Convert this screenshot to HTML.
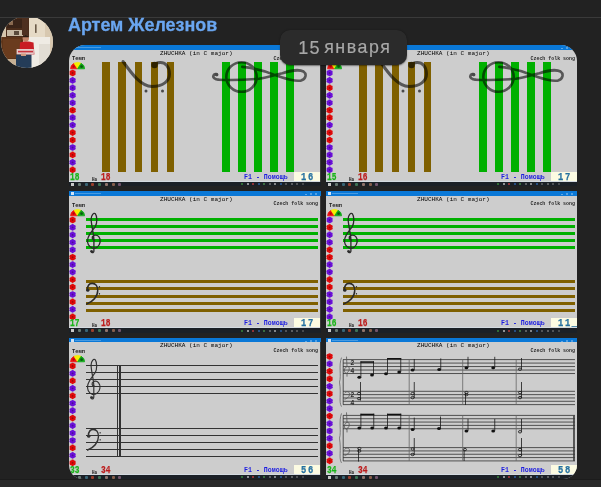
<!DOCTYPE html><html><head><meta charset="utf-8"><style>html,body{margin:0;padding:0;}body{width:601px;height:487px;overflow:hidden;position:relative;background:#222222;font-family:"Liberation Sans",sans-serif;}</style></head><body>
<div style="position:absolute;left:0.5px;top:15.5px;width:52px;height:52px;border-radius:50%;overflow:hidden;background:#e4d8c4"><svg width="52" height="52" viewBox="0 0 52 52" style="position:absolute;left:0;top:0;filter:blur(0.7px)"><g><rect x="26" y="0" width="26" height="52" fill="#e6dac6"/><rect x="44" y="0" width="8" height="52" fill="#d8c8b0"/><rect x="0" y="0" width="28" height="21" fill="#4a2c1a"/><rect x="0" y="6" width="5" height="15" fill="#d6c6ac"/><rect x="6" y="3" width="16" height="9" fill="#3a2418"/><rect x="8" y="5" width="4" height="4" fill="#8a6a50"/><rect x="6" y="14" width="16" height="6" fill="#c8baa4"/><rect x="13" y="15" width="5" height="4" fill="#5a4a3a"/><rect x="0" y="21" width="22" height="23" fill="#5e3418"/><rect x="2" y="23" width="18" height="19" fill="#6a3c1e"/><rect x="21" y="0" width="6" height="19" fill="#4e3020"/><rect x="34" y="8.3" width="1.6" height="8.6" fill="#6a5a48"/><rect x="0" y="43" width="28" height="9" fill="#c6b094"/><path d="M27 21 L49 21 L49 52 L24 52 L24 33 Z" fill="#efebe4"/><rect x="38" y="28" width="11" height="20" fill="#e2ddd4"/><circle cx="24.8" cy="22.3" r="3.2" fill="#c08468"/><path d="M21.6 21.3 C21.6 18.2 28 18.2 28 21.3 Z" fill="#2a1a10"/><path d="M19 26.5 C21 25 29 25 32.5 26.5 L33.4 38.5 L18.5 38.5 Z" fill="#c81c24"/><rect x="15.6" y="33" width="17.2" height="5.5" fill="#e4cccc"/><rect x="17" y="34.8" width="15" height="1.6" fill="#c8343c"/><path d="M15 38.7 L30.5 38.7 L30.5 52 L15 52 Z" fill="#243c58"/><rect x="20" y="37.5" width="5" height="2.5" fill="#d09a80"/></g></svg></div>
<div style="position:absolute;left:0;top:0;width:601px;height:17px;background:#222222"></div>
<div style="position:absolute;left:0;top:17px;width:601px;height:1px;background:#3a3a3a"></div>
<div style="position:absolute;left:67.5px;top:13.5px;font-size:19px;line-height:1.15;color:#6aa6f0;font-weight:bold;white-space:nowrap;-webkit-text-stroke:0.3px #6aa6f0;transform:scaleX(0.942);transform-origin:0 0;">Артем Железнов</div>
<div style="position:absolute;left:69px;top:45px;width:252px;height:141px;overflow:hidden;border-radius:16px 0px 0px 0px;background:#cdcdcd">
<div style="position:absolute;left:0px;top:0px;width:252px;height:5px;background:#0a78d7;"></div>
<div style="position:absolute;left:2px;top:1.2px;width:2.5px;height:2.5px;background:#cfe3f7;"></div>
<div style="position:absolute;left:5.5px;top:2px;width:26px;height:1px;background:rgba(255,255,255,0.25);"></div>
<div style="position:absolute;left:236px;top:2.5px;width:2px;height:1px;background:rgba(255,255,255,0.35);"></div>
<div style="position:absolute;left:241px;top:1.5px;width:2px;height:2px;background:rgba(255,255,255,0.3);"></div>
<div style="position:absolute;left:246px;top:1.5px;width:2px;height:2px;background:rgba(255,255,255,0.3);"></div>
<div style="position:absolute;left:0px;top:136px;width:252px;height:1px;background:#d4dae0;"></div>
<div style="position:absolute;left:0px;top:137px;width:252px;height:4px;background:#1b2026;"></div>
<div style="position:absolute;left:1.5px;top:137.5px;width:3px;height:3px;background:#c8c8c8;"></div>
<div style="position:absolute;left:9.0px;top:137.5px;width:3px;height:3px;background:#8fa89a;border-radius:1px;opacity:0.65;"></div>
<div style="position:absolute;left:15.7px;top:137.5px;width:3px;height:3px;background:#4a8aa0;border-radius:1px;opacity:0.65;"></div>
<div style="position:absolute;left:22.4px;top:137.5px;width:3px;height:3px;background:#e05030;border-radius:1px;opacity:0.65;"></div>
<div style="position:absolute;left:29.1px;top:137.5px;width:3px;height:3px;background:#50a070;border-radius:1px;opacity:0.65;"></div>
<div style="position:absolute;left:35.8px;top:137.5px;width:3px;height:3px;background:#d0a090;border-radius:1px;opacity:0.65;"></div>
<div style="position:absolute;left:42.5px;top:137.5px;width:3px;height:3px;background:#c08060;border-radius:1px;opacity:0.65;"></div>
<div style="position:absolute;left:49.2px;top:137.5px;width:3px;height:3px;background:#a07090;border-radius:1px;opacity:0.65;"></div>
<div style="position:absolute;left:172.0px;top:138.0px;width:2px;height:2px;background:#40a040;opacity:0.6;"></div>
<div style="position:absolute;left:177.5px;top:138.0px;width:2px;height:2px;background:#e0e0e0;opacity:0.6;"></div>
<div style="position:absolute;left:183.0px;top:138.0px;width:2px;height:2px;background:#e04040;opacity:0.6;"></div>
<div style="position:absolute;left:188.5px;top:138.0px;width:2px;height:2px;background:#3070c0;opacity:0.6;"></div>
<div style="position:absolute;left:194.0px;top:138.0px;width:2px;height:2px;background:#50a050;opacity:0.6;"></div>
<div style="position:absolute;left:199.5px;top:138.0px;width:2px;height:2px;background:#888;opacity:0.6;"></div>
<div style="position:absolute;left:205.0px;top:138.0px;width:2px;height:2px;background:#ccc;opacity:0.6;"></div>
<div style="position:absolute;left:210.5px;top:138.0px;width:2px;height:2px;background:#3070c0;opacity:0.6;"></div>
<div style="position:absolute;left:216.0px;top:138.0px;width:2px;height:2px;background:#777;opacity:0.6;"></div>
<div style="position:absolute;left:221.5px;top:138.0px;width:2px;height:2px;background:#888;opacity:0.6;"></div>
<div style="position:absolute;left:227.0px;top:138.0px;width:2px;height:2px;background:#777;opacity:0.6;"></div>
<div style="position:absolute;left:232.5px;top:138.0px;width:2px;height:2px;background:#666;opacity:0.6;"></div>
<div style="position:absolute;left:250.8px;top:5px;width:1.2px;height:132px;background:#3c3c3c;"></div>
<div style="position:absolute;left:91px;top:5.5px;font-size:6.05px;line-height:1;color:#000;white-space:nowrap;font-family:'Liberation Mono',monospace;">ZHUCHKA (in C major)</div>
<div style="position:absolute;left:204.5px;top:11.5px;font-size:4.95px;line-height:1;color:#2a2a2a;white-space:nowrap;font-family:'Liberation Mono',monospace;font-weight:bold;">Czech folk song</div>
<div style="position:absolute;left:2.6px;top:11.3px;font-size:6px;line-height:1;color:#1a1a1a;white-space:nowrap;font-family:'Liberation Mono',monospace;font-weight:bold;transform:scaleX(0.9);transform-origin:0 0;">Темп</div>
<svg style="position:absolute;left:0px;top:16px" width="18" height="9" viewBox="0 0 18 9"><path d="M8.6 7.8 L1.6 7.8 A7 6.3 0 0 1 5.1 2.3 Z" fill="#f01010" stroke="#f01010" stroke-width="0.8" stroke-linejoin="round"/><path d="M8.6 7.8 L5.1 2.3 A7 6.3 0 0 1 12.1 2.3 Z" fill="#f4f000" stroke="#f4f000" stroke-width="0.8" stroke-linejoin="round"/><path d="M8.6 7.8 L12.1 2.3 A7 6.3 0 0 1 15.6 7.8 Z" fill="#10a818" stroke="#10a818" stroke-width="0.8" stroke-linejoin="round"/><circle cx="12.6" cy="5.6" r="1.3" fill="#0a5a10"/><circle cx="4.6" cy="5.6" r="1.1" fill="#b00808"/></svg>
<svg style="position:absolute;left:0px;top:0px" width="8" height="141" viewBox="0 0 8 141"><circle cx="5.25" cy="28.95" r="1.45" fill="#e00a0a"/><circle cx="3.60" cy="29.90" r="1.45" fill="#e00a0a"/><circle cx="1.95" cy="28.95" r="1.45" fill="#e00a0a"/><circle cx="1.95" cy="27.05" r="1.45" fill="#e00a0a"/><circle cx="3.60" cy="26.10" r="1.45" fill="#e00a0a"/><circle cx="5.25" cy="27.05" r="1.45" fill="#e00a0a"/><circle cx="3.6" cy="28" r="2.2" fill="#e00a0a"/><circle cx="3.6" cy="28" r="0.9" fill="#000" opacity="0.3"/><circle cx="5.25" cy="36.40" r="1.45" fill="#6a10d8"/><circle cx="3.60" cy="37.35" r="1.45" fill="#6a10d8"/><circle cx="1.95" cy="36.40" r="1.45" fill="#6a10d8"/><circle cx="1.95" cy="34.50" r="1.45" fill="#6a10d8"/><circle cx="3.60" cy="33.55" r="1.45" fill="#6a10d8"/><circle cx="5.25" cy="34.50" r="1.45" fill="#6a10d8"/><circle cx="3.6" cy="35.45" r="2.2" fill="#6a10d8"/><circle cx="3.6" cy="35.45" r="0.9" fill="#000" opacity="0.3"/><circle cx="5.25" cy="43.85" r="1.45" fill="#6a10d8"/><circle cx="3.60" cy="44.80" r="1.45" fill="#6a10d8"/><circle cx="1.95" cy="43.85" r="1.45" fill="#6a10d8"/><circle cx="1.95" cy="41.95" r="1.45" fill="#6a10d8"/><circle cx="3.60" cy="41.00" r="1.45" fill="#6a10d8"/><circle cx="5.25" cy="41.95" r="1.45" fill="#6a10d8"/><circle cx="3.6" cy="42.900000000000006" r="2.2" fill="#6a10d8"/><circle cx="3.6" cy="42.900000000000006" r="0.9" fill="#000" opacity="0.3"/><circle cx="5.25" cy="51.30" r="1.45" fill="#6a10d8"/><circle cx="3.60" cy="52.25" r="1.45" fill="#6a10d8"/><circle cx="1.95" cy="51.30" r="1.45" fill="#6a10d8"/><circle cx="1.95" cy="49.40" r="1.45" fill="#6a10d8"/><circle cx="3.60" cy="48.45" r="1.45" fill="#6a10d8"/><circle cx="5.25" cy="49.40" r="1.45" fill="#6a10d8"/><circle cx="3.6" cy="50.35000000000001" r="2.2" fill="#6a10d8"/><circle cx="3.6" cy="50.35000000000001" r="0.9" fill="#000" opacity="0.3"/><circle cx="5.25" cy="58.75" r="1.45" fill="#6a10d8"/><circle cx="3.60" cy="59.70" r="1.45" fill="#6a10d8"/><circle cx="1.95" cy="58.75" r="1.45" fill="#6a10d8"/><circle cx="1.95" cy="56.85" r="1.45" fill="#6a10d8"/><circle cx="3.60" cy="55.90" r="1.45" fill="#6a10d8"/><circle cx="5.25" cy="56.85" r="1.45" fill="#6a10d8"/><circle cx="3.6" cy="57.80000000000001" r="2.2" fill="#6a10d8"/><circle cx="3.6" cy="57.80000000000001" r="0.9" fill="#000" opacity="0.3"/><circle cx="5.25" cy="66.20" r="1.45" fill="#e00a0a"/><circle cx="3.60" cy="67.15" r="1.45" fill="#e00a0a"/><circle cx="1.95" cy="66.20" r="1.45" fill="#e00a0a"/><circle cx="1.95" cy="64.30" r="1.45" fill="#e00a0a"/><circle cx="3.60" cy="63.35" r="1.45" fill="#e00a0a"/><circle cx="5.25" cy="64.30" r="1.45" fill="#e00a0a"/><circle cx="3.6" cy="65.25000000000001" r="2.2" fill="#e00a0a"/><circle cx="3.6" cy="65.25000000000001" r="0.9" fill="#000" opacity="0.3"/><circle cx="5.25" cy="73.65" r="1.45" fill="#6a10d8"/><circle cx="3.60" cy="74.60" r="1.45" fill="#6a10d8"/><circle cx="1.95" cy="73.65" r="1.45" fill="#6a10d8"/><circle cx="1.95" cy="71.75" r="1.45" fill="#6a10d8"/><circle cx="3.60" cy="70.80" r="1.45" fill="#6a10d8"/><circle cx="5.25" cy="71.75" r="1.45" fill="#6a10d8"/><circle cx="3.6" cy="72.70000000000002" r="2.2" fill="#6a10d8"/><circle cx="3.6" cy="72.70000000000002" r="0.9" fill="#000" opacity="0.3"/><circle cx="5.25" cy="81.10" r="1.45" fill="#6a10d8"/><circle cx="3.60" cy="82.05" r="1.45" fill="#6a10d8"/><circle cx="1.95" cy="81.10" r="1.45" fill="#6a10d8"/><circle cx="1.95" cy="79.20" r="1.45" fill="#6a10d8"/><circle cx="3.60" cy="78.25" r="1.45" fill="#6a10d8"/><circle cx="5.25" cy="79.20" r="1.45" fill="#6a10d8"/><circle cx="3.6" cy="80.15000000000002" r="2.2" fill="#6a10d8"/><circle cx="3.6" cy="80.15000000000002" r="0.9" fill="#000" opacity="0.3"/><circle cx="5.25" cy="88.55" r="1.45" fill="#e00a0a"/><circle cx="3.60" cy="89.50" r="1.45" fill="#e00a0a"/><circle cx="1.95" cy="88.55" r="1.45" fill="#e00a0a"/><circle cx="1.95" cy="86.65" r="1.45" fill="#e00a0a"/><circle cx="3.60" cy="85.70" r="1.45" fill="#e00a0a"/><circle cx="5.25" cy="86.65" r="1.45" fill="#e00a0a"/><circle cx="3.6" cy="87.60000000000002" r="2.2" fill="#e00a0a"/><circle cx="3.6" cy="87.60000000000002" r="0.9" fill="#000" opacity="0.3"/><circle cx="5.25" cy="96.00" r="1.45" fill="#e00a0a"/><circle cx="3.60" cy="96.95" r="1.45" fill="#e00a0a"/><circle cx="1.95" cy="96.00" r="1.45" fill="#e00a0a"/><circle cx="1.95" cy="94.10" r="1.45" fill="#e00a0a"/><circle cx="3.60" cy="93.15" r="1.45" fill="#e00a0a"/><circle cx="5.25" cy="94.10" r="1.45" fill="#e00a0a"/><circle cx="3.6" cy="95.05000000000003" r="2.2" fill="#e00a0a"/><circle cx="3.6" cy="95.05000000000003" r="0.9" fill="#000" opacity="0.3"/><circle cx="5.25" cy="103.45" r="1.45" fill="#6a10d8"/><circle cx="3.60" cy="104.40" r="1.45" fill="#6a10d8"/><circle cx="1.95" cy="103.45" r="1.45" fill="#6a10d8"/><circle cx="1.95" cy="101.55" r="1.45" fill="#6a10d8"/><circle cx="3.60" cy="100.60" r="1.45" fill="#6a10d8"/><circle cx="5.25" cy="101.55" r="1.45" fill="#6a10d8"/><circle cx="3.6" cy="102.50000000000003" r="2.2" fill="#6a10d8"/><circle cx="3.6" cy="102.50000000000003" r="0.9" fill="#000" opacity="0.3"/><circle cx="5.25" cy="110.90" r="1.45" fill="#e00a0a"/><circle cx="3.60" cy="111.85" r="1.45" fill="#e00a0a"/><circle cx="1.95" cy="110.90" r="1.45" fill="#e00a0a"/><circle cx="1.95" cy="109.00" r="1.45" fill="#e00a0a"/><circle cx="3.60" cy="108.05" r="1.45" fill="#e00a0a"/><circle cx="5.25" cy="109.00" r="1.45" fill="#e00a0a"/><circle cx="3.6" cy="109.95000000000003" r="2.2" fill="#e00a0a"/><circle cx="3.6" cy="109.95000000000003" r="0.9" fill="#000" opacity="0.3"/><circle cx="5.25" cy="118.35" r="1.45" fill="#6a10d8"/><circle cx="3.60" cy="119.30" r="1.45" fill="#6a10d8"/><circle cx="1.95" cy="118.35" r="1.45" fill="#6a10d8"/><circle cx="1.95" cy="116.45" r="1.45" fill="#6a10d8"/><circle cx="3.60" cy="115.50" r="1.45" fill="#6a10d8"/><circle cx="5.25" cy="116.45" r="1.45" fill="#6a10d8"/><circle cx="3.6" cy="117.40000000000003" r="2.2" fill="#6a10d8"/><circle cx="3.6" cy="117.40000000000003" r="0.9" fill="#000" opacity="0.3"/><circle cx="5.25" cy="125.80" r="1.45" fill="#e00a0a"/><circle cx="3.60" cy="126.75" r="1.45" fill="#e00a0a"/><circle cx="1.95" cy="125.80" r="1.45" fill="#e00a0a"/><circle cx="1.95" cy="123.90" r="1.45" fill="#e00a0a"/><circle cx="3.60" cy="122.95" r="1.45" fill="#e00a0a"/><circle cx="5.25" cy="123.90" r="1.45" fill="#e00a0a"/><circle cx="3.6" cy="124.85000000000004" r="2.2" fill="#e00a0a"/><circle cx="3.6" cy="124.85000000000004" r="0.9" fill="#000" opacity="0.3"/></svg>
<div style="position:absolute;left:33.3px;top:16.7px;width:7.8px;height:110.3px;background:#7f6000;"></div>
<div style="position:absolute;left:153.2px;top:16.7px;width:7.8px;height:110.3px;background:#00b000;"></div>
<div style="position:absolute;left:49.4px;top:16.7px;width:7.8px;height:110.3px;background:#7f6000;"></div>
<div style="position:absolute;left:169.2px;top:16.7px;width:7.8px;height:110.3px;background:#00b000;"></div>
<div style="position:absolute;left:65.5px;top:16.7px;width:7.8px;height:110.3px;background:#7f6000;"></div>
<div style="position:absolute;left:185.2px;top:16.7px;width:7.8px;height:110.3px;background:#00b000;"></div>
<div style="position:absolute;left:81.6px;top:16.7px;width:7.8px;height:110.3px;background:#7f6000;"></div>
<div style="position:absolute;left:201.2px;top:16.7px;width:7.8px;height:110.3px;background:#00b000;"></div>
<div style="position:absolute;left:97.7px;top:16.7px;width:7.8px;height:110.3px;background:#7f6000;"></div>
<div style="position:absolute;left:217.2px;top:16.7px;width:7.8px;height:110.3px;background:#00b000;"></div>
<svg style="position:absolute;left:0;top:-1px;mix-blend-mode:multiply" width="252" height="141" viewBox="0 0 252 141"><g fill="none" stroke="#6c6c6c" stroke-width="2.6" stroke-linecap="round"><path stroke-width="3" d="M54 17.5 C63 30 72 42.5 83 42.5 C94 42.5 100.5 37 100.5 30 C100.5 22 96 18.3 91 18.5 C88 18.6 86 19.5 85 21"/><path d="M149.5 35.7 C158 36.2 175 36 189.8 34.8 C200 33.5 208 30 213.5 29.3 C220 27 230 25 234.5 27.5 C238 30 237 35 232 36.6 C225 37.5 218 35 206.2 31.1 C196 27 186 24 173.3 22.9"/><ellipse cx="172.5" cy="33" rx="15.2" ry="14.8"/><path d="M149.5 35.7 C146 35.5 143.5 33.5 144.5 31.5 C145.5 29.8 147.5 29.8 148 31"/></g><g fill="#5a5a5a"><circle cx="85.5" cy="21" r="3.3"/><circle cx="77" cy="47" r="1.5"/><circle cx="93.5" cy="47" r="1.5"/><circle cx="147.5" cy="30.5" r="1.8"/></g></svg>
<div style="position:absolute;left:0.6px;top:126.4px;font-size:11.6px;line-height:1;color:#18b418;white-space:nowrap;font-family:'Liberation Mono',monospace;font-weight:bold;-webkit-text-stroke:0.25px currentColor;transform:scaleX(0.68);transform-origin:0 0;">18</div>
<div style="position:absolute;left:23px;top:132.6px;font-size:5px;line-height:1;color:#1a1a1a;white-space:nowrap;font-family:'Liberation Mono',monospace;font-weight:bold;transform:scaleX(0.85);transform-origin:0 0;">На</div>
<div style="position:absolute;left:31.6px;top:126.4px;font-size:11.6px;line-height:1;color:#bc1c1c;white-space:nowrap;font-family:'Liberation Mono',monospace;font-weight:bold;-webkit-text-stroke:0.25px currentColor;transform:scaleX(0.68);transform-origin:0 0;">18</div>
<div style="position:absolute;left:174.5px;top:129.3px;font-size:7.2px;line-height:1;color:#1c1ce0;white-space:nowrap;font-family:'Liberation Mono',monospace;font-weight:bold;transform:scaleX(0.92);transform-origin:0 0;">F1 - Помощь</div>
<div style="position:absolute;left:225.2px;top:127.4px;width:25.600000000000012px;height:8.3px;background:#fcfbe2;"></div>
<div style="position:absolute;left:231.6px;top:126.7px;font-size:11px;line-height:1;color:#2470a0;white-space:nowrap;font-family:'Liberation Mono',monospace;font-weight:bold;letter-spacing:2px;-webkit-text-stroke:0.25px currentColor;transform:scaleX(0.8);transform-origin:0 0;">16</div>
</div>
<div style="position:absolute;left:326px;top:45px;width:251px;height:141px;overflow:hidden;border-radius:0px 16px 0px 0px;background:#cdcdcd">
<div style="position:absolute;left:0px;top:0px;width:251px;height:5px;background:#0a78d7;"></div>
<div style="position:absolute;left:2px;top:1.2px;width:2.5px;height:2.5px;background:#cfe3f7;"></div>
<div style="position:absolute;left:5.5px;top:2px;width:26px;height:1px;background:rgba(255,255,255,0.25);"></div>
<div style="position:absolute;left:235px;top:2.5px;width:2px;height:1px;background:rgba(255,255,255,0.35);"></div>
<div style="position:absolute;left:240px;top:1.5px;width:2px;height:2px;background:rgba(255,255,255,0.3);"></div>
<div style="position:absolute;left:245px;top:1.5px;width:2px;height:2px;background:rgba(255,255,255,0.3);"></div>
<div style="position:absolute;left:0px;top:136px;width:251px;height:1px;background:#d4dae0;"></div>
<div style="position:absolute;left:0px;top:137px;width:251px;height:4px;background:#1b2026;"></div>
<div style="position:absolute;left:1.5px;top:137.5px;width:3px;height:3px;background:#c8c8c8;"></div>
<div style="position:absolute;left:9.0px;top:137.5px;width:3px;height:3px;background:#8fa89a;border-radius:1px;opacity:0.65;"></div>
<div style="position:absolute;left:15.7px;top:137.5px;width:3px;height:3px;background:#4a8aa0;border-radius:1px;opacity:0.65;"></div>
<div style="position:absolute;left:22.4px;top:137.5px;width:3px;height:3px;background:#e05030;border-radius:1px;opacity:0.65;"></div>
<div style="position:absolute;left:29.1px;top:137.5px;width:3px;height:3px;background:#50a070;border-radius:1px;opacity:0.65;"></div>
<div style="position:absolute;left:35.8px;top:137.5px;width:3px;height:3px;background:#d0a090;border-radius:1px;opacity:0.65;"></div>
<div style="position:absolute;left:42.5px;top:137.5px;width:3px;height:3px;background:#c08060;border-radius:1px;opacity:0.65;"></div>
<div style="position:absolute;left:49.2px;top:137.5px;width:3px;height:3px;background:#a07090;border-radius:1px;opacity:0.65;"></div>
<div style="position:absolute;left:171.0px;top:138.0px;width:2px;height:2px;background:#40a040;opacity:0.6;"></div>
<div style="position:absolute;left:176.5px;top:138.0px;width:2px;height:2px;background:#e0e0e0;opacity:0.6;"></div>
<div style="position:absolute;left:182.0px;top:138.0px;width:2px;height:2px;background:#e04040;opacity:0.6;"></div>
<div style="position:absolute;left:187.5px;top:138.0px;width:2px;height:2px;background:#3070c0;opacity:0.6;"></div>
<div style="position:absolute;left:193.0px;top:138.0px;width:2px;height:2px;background:#50a050;opacity:0.6;"></div>
<div style="position:absolute;left:198.5px;top:138.0px;width:2px;height:2px;background:#888;opacity:0.6;"></div>
<div style="position:absolute;left:204.0px;top:138.0px;width:2px;height:2px;background:#ccc;opacity:0.6;"></div>
<div style="position:absolute;left:209.5px;top:138.0px;width:2px;height:2px;background:#3070c0;opacity:0.6;"></div>
<div style="position:absolute;left:215.0px;top:138.0px;width:2px;height:2px;background:#777;opacity:0.6;"></div>
<div style="position:absolute;left:220.5px;top:138.0px;width:2px;height:2px;background:#888;opacity:0.6;"></div>
<div style="position:absolute;left:226.0px;top:138.0px;width:2px;height:2px;background:#777;opacity:0.6;"></div>
<div style="position:absolute;left:231.5px;top:138.0px;width:2px;height:2px;background:#666;opacity:0.6;"></div>
<div style="position:absolute;left:91px;top:5.5px;font-size:6.05px;line-height:1;color:#000;white-space:nowrap;font-family:'Liberation Mono',monospace;">ZHUCHKA (in C major)</div>
<div style="position:absolute;left:204.5px;top:11.5px;font-size:4.95px;line-height:1;color:#2a2a2a;white-space:nowrap;font-family:'Liberation Mono',monospace;font-weight:bold;">Czech folk song</div>
<div style="position:absolute;left:2.6px;top:11.3px;font-size:6px;line-height:1;color:#1a1a1a;white-space:nowrap;font-family:'Liberation Mono',monospace;font-weight:bold;transform:scaleX(0.9);transform-origin:0 0;">Темп</div>
<svg style="position:absolute;left:0px;top:16px" width="18" height="9" viewBox="0 0 18 9"><path d="M8.6 7.8 L1.6 7.8 A7 6.3 0 0 1 5.1 2.3 Z" fill="#f01010" stroke="#f01010" stroke-width="0.8" stroke-linejoin="round"/><path d="M8.6 7.8 L5.1 2.3 A7 6.3 0 0 1 12.1 2.3 Z" fill="#f4f000" stroke="#f4f000" stroke-width="0.8" stroke-linejoin="round"/><path d="M8.6 7.8 L12.1 2.3 A7 6.3 0 0 1 15.6 7.8 Z" fill="#10a818" stroke="#10a818" stroke-width="0.8" stroke-linejoin="round"/><circle cx="12.6" cy="5.6" r="1.3" fill="#0a5a10"/><circle cx="4.6" cy="5.6" r="1.1" fill="#b00808"/></svg>
<svg style="position:absolute;left:0px;top:0px" width="8" height="141" viewBox="0 0 8 141"><circle cx="5.25" cy="28.95" r="1.45" fill="#6a10d8"/><circle cx="3.60" cy="29.90" r="1.45" fill="#6a10d8"/><circle cx="1.95" cy="28.95" r="1.45" fill="#6a10d8"/><circle cx="1.95" cy="27.05" r="1.45" fill="#6a10d8"/><circle cx="3.60" cy="26.10" r="1.45" fill="#6a10d8"/><circle cx="5.25" cy="27.05" r="1.45" fill="#6a10d8"/><circle cx="3.6" cy="28" r="2.2" fill="#6a10d8"/><circle cx="3.6" cy="28" r="0.9" fill="#000" opacity="0.3"/><circle cx="5.25" cy="36.40" r="1.45" fill="#6a10d8"/><circle cx="3.60" cy="37.35" r="1.45" fill="#6a10d8"/><circle cx="1.95" cy="36.40" r="1.45" fill="#6a10d8"/><circle cx="1.95" cy="34.50" r="1.45" fill="#6a10d8"/><circle cx="3.60" cy="33.55" r="1.45" fill="#6a10d8"/><circle cx="5.25" cy="34.50" r="1.45" fill="#6a10d8"/><circle cx="3.6" cy="35.45" r="2.2" fill="#6a10d8"/><circle cx="3.6" cy="35.45" r="0.9" fill="#000" opacity="0.3"/><circle cx="5.25" cy="43.85" r="1.45" fill="#e00a0a"/><circle cx="3.60" cy="44.80" r="1.45" fill="#e00a0a"/><circle cx="1.95" cy="43.85" r="1.45" fill="#e00a0a"/><circle cx="1.95" cy="41.95" r="1.45" fill="#e00a0a"/><circle cx="3.60" cy="41.00" r="1.45" fill="#e00a0a"/><circle cx="5.25" cy="41.95" r="1.45" fill="#e00a0a"/><circle cx="3.6" cy="42.900000000000006" r="2.2" fill="#e00a0a"/><circle cx="3.6" cy="42.900000000000006" r="0.9" fill="#000" opacity="0.3"/><circle cx="5.25" cy="51.30" r="1.45" fill="#6a10d8"/><circle cx="3.60" cy="52.25" r="1.45" fill="#6a10d8"/><circle cx="1.95" cy="51.30" r="1.45" fill="#6a10d8"/><circle cx="1.95" cy="49.40" r="1.45" fill="#6a10d8"/><circle cx="3.60" cy="48.45" r="1.45" fill="#6a10d8"/><circle cx="5.25" cy="49.40" r="1.45" fill="#6a10d8"/><circle cx="3.6" cy="50.35000000000001" r="2.2" fill="#6a10d8"/><circle cx="3.6" cy="50.35000000000001" r="0.9" fill="#000" opacity="0.3"/><circle cx="5.25" cy="58.75" r="1.45" fill="#6a10d8"/><circle cx="3.60" cy="59.70" r="1.45" fill="#6a10d8"/><circle cx="1.95" cy="58.75" r="1.45" fill="#6a10d8"/><circle cx="1.95" cy="56.85" r="1.45" fill="#6a10d8"/><circle cx="3.60" cy="55.90" r="1.45" fill="#6a10d8"/><circle cx="5.25" cy="56.85" r="1.45" fill="#6a10d8"/><circle cx="3.6" cy="57.80000000000001" r="2.2" fill="#6a10d8"/><circle cx="3.6" cy="57.80000000000001" r="0.9" fill="#000" opacity="0.3"/><circle cx="5.25" cy="66.20" r="1.45" fill="#e00a0a"/><circle cx="3.60" cy="67.15" r="1.45" fill="#e00a0a"/><circle cx="1.95" cy="66.20" r="1.45" fill="#e00a0a"/><circle cx="1.95" cy="64.30" r="1.45" fill="#e00a0a"/><circle cx="3.60" cy="63.35" r="1.45" fill="#e00a0a"/><circle cx="5.25" cy="64.30" r="1.45" fill="#e00a0a"/><circle cx="3.6" cy="65.25000000000001" r="2.2" fill="#e00a0a"/><circle cx="3.6" cy="65.25000000000001" r="0.9" fill="#000" opacity="0.3"/><circle cx="5.25" cy="73.65" r="1.45" fill="#e00a0a"/><circle cx="3.60" cy="74.60" r="1.45" fill="#e00a0a"/><circle cx="1.95" cy="73.65" r="1.45" fill="#e00a0a"/><circle cx="1.95" cy="71.75" r="1.45" fill="#e00a0a"/><circle cx="3.60" cy="70.80" r="1.45" fill="#e00a0a"/><circle cx="5.25" cy="71.75" r="1.45" fill="#e00a0a"/><circle cx="3.6" cy="72.70000000000002" r="2.2" fill="#e00a0a"/><circle cx="3.6" cy="72.70000000000002" r="0.9" fill="#000" opacity="0.3"/><circle cx="5.25" cy="81.10" r="1.45" fill="#6a10d8"/><circle cx="3.60" cy="82.05" r="1.45" fill="#6a10d8"/><circle cx="1.95" cy="81.10" r="1.45" fill="#6a10d8"/><circle cx="1.95" cy="79.20" r="1.45" fill="#6a10d8"/><circle cx="3.60" cy="78.25" r="1.45" fill="#6a10d8"/><circle cx="5.25" cy="79.20" r="1.45" fill="#6a10d8"/><circle cx="3.6" cy="80.15000000000002" r="2.2" fill="#6a10d8"/><circle cx="3.6" cy="80.15000000000002" r="0.9" fill="#000" opacity="0.3"/><circle cx="5.25" cy="88.55" r="1.45" fill="#e00a0a"/><circle cx="3.60" cy="89.50" r="1.45" fill="#e00a0a"/><circle cx="1.95" cy="88.55" r="1.45" fill="#e00a0a"/><circle cx="1.95" cy="86.65" r="1.45" fill="#e00a0a"/><circle cx="3.60" cy="85.70" r="1.45" fill="#e00a0a"/><circle cx="5.25" cy="86.65" r="1.45" fill="#e00a0a"/><circle cx="3.6" cy="87.60000000000002" r="2.2" fill="#e00a0a"/><circle cx="3.6" cy="87.60000000000002" r="0.9" fill="#000" opacity="0.3"/><circle cx="5.25" cy="96.00" r="1.45" fill="#e00a0a"/><circle cx="3.60" cy="96.95" r="1.45" fill="#e00a0a"/><circle cx="1.95" cy="96.00" r="1.45" fill="#e00a0a"/><circle cx="1.95" cy="94.10" r="1.45" fill="#e00a0a"/><circle cx="3.60" cy="93.15" r="1.45" fill="#e00a0a"/><circle cx="5.25" cy="94.10" r="1.45" fill="#e00a0a"/><circle cx="3.6" cy="95.05000000000003" r="2.2" fill="#e00a0a"/><circle cx="3.6" cy="95.05000000000003" r="0.9" fill="#000" opacity="0.3"/><circle cx="5.25" cy="103.45" r="1.45" fill="#6a10d8"/><circle cx="3.60" cy="104.40" r="1.45" fill="#6a10d8"/><circle cx="1.95" cy="103.45" r="1.45" fill="#6a10d8"/><circle cx="1.95" cy="101.55" r="1.45" fill="#6a10d8"/><circle cx="3.60" cy="100.60" r="1.45" fill="#6a10d8"/><circle cx="5.25" cy="101.55" r="1.45" fill="#6a10d8"/><circle cx="3.6" cy="102.50000000000003" r="2.2" fill="#6a10d8"/><circle cx="3.6" cy="102.50000000000003" r="0.9" fill="#000" opacity="0.3"/><circle cx="5.25" cy="110.90" r="1.45" fill="#6a10d8"/><circle cx="3.60" cy="111.85" r="1.45" fill="#6a10d8"/><circle cx="1.95" cy="110.90" r="1.45" fill="#6a10d8"/><circle cx="1.95" cy="109.00" r="1.45" fill="#6a10d8"/><circle cx="3.60" cy="108.05" r="1.45" fill="#6a10d8"/><circle cx="5.25" cy="109.00" r="1.45" fill="#6a10d8"/><circle cx="3.6" cy="109.95000000000003" r="2.2" fill="#6a10d8"/><circle cx="3.6" cy="109.95000000000003" r="0.9" fill="#000" opacity="0.3"/><circle cx="5.25" cy="118.35" r="1.45" fill="#6a10d8"/><circle cx="3.60" cy="119.30" r="1.45" fill="#6a10d8"/><circle cx="1.95" cy="118.35" r="1.45" fill="#6a10d8"/><circle cx="1.95" cy="116.45" r="1.45" fill="#6a10d8"/><circle cx="3.60" cy="115.50" r="1.45" fill="#6a10d8"/><circle cx="5.25" cy="116.45" r="1.45" fill="#6a10d8"/><circle cx="3.6" cy="117.40000000000003" r="2.2" fill="#6a10d8"/><circle cx="3.6" cy="117.40000000000003" r="0.9" fill="#000" opacity="0.3"/><circle cx="5.25" cy="125.80" r="1.45" fill="#6a10d8"/><circle cx="3.60" cy="126.75" r="1.45" fill="#6a10d8"/><circle cx="1.95" cy="125.80" r="1.45" fill="#6a10d8"/><circle cx="1.95" cy="123.90" r="1.45" fill="#6a10d8"/><circle cx="3.60" cy="122.95" r="1.45" fill="#6a10d8"/><circle cx="5.25" cy="123.90" r="1.45" fill="#6a10d8"/><circle cx="3.6" cy="124.85000000000004" r="2.2" fill="#6a10d8"/><circle cx="3.6" cy="124.85000000000004" r="0.9" fill="#000" opacity="0.3"/></svg>
<div style="position:absolute;left:33.3px;top:16.7px;width:7.8px;height:110.3px;background:#7f6000;"></div>
<div style="position:absolute;left:153.2px;top:16.7px;width:7.8px;height:110.3px;background:#00b000;"></div>
<div style="position:absolute;left:49.4px;top:16.7px;width:7.8px;height:110.3px;background:#7f6000;"></div>
<div style="position:absolute;left:169.2px;top:16.7px;width:7.8px;height:110.3px;background:#00b000;"></div>
<div style="position:absolute;left:65.5px;top:16.7px;width:7.8px;height:110.3px;background:#7f6000;"></div>
<div style="position:absolute;left:185.2px;top:16.7px;width:7.8px;height:110.3px;background:#00b000;"></div>
<div style="position:absolute;left:81.6px;top:16.7px;width:7.8px;height:110.3px;background:#7f6000;"></div>
<div style="position:absolute;left:201.2px;top:16.7px;width:7.8px;height:110.3px;background:#00b000;"></div>
<div style="position:absolute;left:97.7px;top:16.7px;width:7.8px;height:110.3px;background:#7f6000;"></div>
<div style="position:absolute;left:217.2px;top:16.7px;width:7.8px;height:110.3px;background:#00b000;"></div>
<svg style="position:absolute;left:0;top:-1px;mix-blend-mode:multiply" width="251" height="141" viewBox="0 0 251 141"><g fill="none" stroke="#6c6c6c" stroke-width="2.6" stroke-linecap="round"><path stroke-width="3" d="M54 17.5 C63 30 72 42.5 83 42.5 C94 42.5 100.5 37 100.5 30 C100.5 22 96 18.3 91 18.5 C88 18.6 86 19.5 85 21"/><path d="M149.5 35.7 C158 36.2 175 36 189.8 34.8 C200 33.5 208 30 213.5 29.3 C220 27 230 25 234.5 27.5 C238 30 237 35 232 36.6 C225 37.5 218 35 206.2 31.1 C196 27 186 24 173.3 22.9"/><ellipse cx="172.5" cy="33" rx="15.2" ry="14.8"/><path d="M149.5 35.7 C146 35.5 143.5 33.5 144.5 31.5 C145.5 29.8 147.5 29.8 148 31"/></g><g fill="#5a5a5a"><circle cx="85.5" cy="21" r="3.3"/><circle cx="77" cy="47" r="1.5"/><circle cx="93.5" cy="47" r="1.5"/><circle cx="147.5" cy="30.5" r="1.8"/></g></svg>
<div style="position:absolute;left:0.6px;top:126.4px;font-size:11.6px;line-height:1;color:#18b418;white-space:nowrap;font-family:'Liberation Mono',monospace;font-weight:bold;-webkit-text-stroke:0.25px currentColor;transform:scaleX(0.68);transform-origin:0 0;">15</div>
<div style="position:absolute;left:23px;top:132.6px;font-size:5px;line-height:1;color:#1a1a1a;white-space:nowrap;font-family:'Liberation Mono',monospace;font-weight:bold;transform:scaleX(0.85);transform-origin:0 0;">На</div>
<div style="position:absolute;left:31.6px;top:126.4px;font-size:11.6px;line-height:1;color:#bc1c1c;white-space:nowrap;font-family:'Liberation Mono',monospace;font-weight:bold;-webkit-text-stroke:0.25px currentColor;transform:scaleX(0.68);transform-origin:0 0;">16</div>
<div style="position:absolute;left:174.5px;top:129.3px;font-size:7.2px;line-height:1;color:#1c1ce0;white-space:nowrap;font-family:'Liberation Mono',monospace;font-weight:bold;transform:scaleX(0.92);transform-origin:0 0;">F1 - Помощь</div>
<div style="position:absolute;left:225.2px;top:127.4px;width:25.80000000000001px;height:8.3px;background:#fcfbe2;"></div>
<div style="position:absolute;left:231.6px;top:126.7px;font-size:11px;line-height:1;color:#2470a0;white-space:nowrap;font-family:'Liberation Mono',monospace;font-weight:bold;letter-spacing:2px;-webkit-text-stroke:0.25px currentColor;transform:scaleX(0.8);transform-origin:0 0;">17</div>
</div>
<div style="position:absolute;left:69px;top:191px;width:252px;height:142px;overflow:hidden;border-radius:0px 0px 0px 0px;background:#cdcdcd">
<div style="position:absolute;left:0px;top:0px;width:252px;height:5px;background:#0a78d7;"></div>
<div style="position:absolute;left:2px;top:1.2px;width:2.5px;height:2.5px;background:#cfe3f7;"></div>
<div style="position:absolute;left:5.5px;top:2px;width:26px;height:1px;background:rgba(255,255,255,0.25);"></div>
<div style="position:absolute;left:236px;top:2.5px;width:2px;height:1px;background:rgba(255,255,255,0.35);"></div>
<div style="position:absolute;left:241px;top:1.5px;width:2px;height:2px;background:rgba(255,255,255,0.3);"></div>
<div style="position:absolute;left:246px;top:1.5px;width:2px;height:2px;background:rgba(255,255,255,0.3);"></div>
<div style="position:absolute;left:0px;top:136px;width:252px;height:1px;background:#d4dae0;"></div>
<div style="position:absolute;left:0px;top:137px;width:252px;height:5px;background:#1b2026;"></div>
<div style="position:absolute;left:1.5px;top:138.0px;width:3px;height:3px;background:#c8c8c8;"></div>
<div style="position:absolute;left:9.0px;top:138.0px;width:3px;height:3px;background:#8fa89a;border-radius:1px;opacity:0.65;"></div>
<div style="position:absolute;left:15.7px;top:138.0px;width:3px;height:3px;background:#4a8aa0;border-radius:1px;opacity:0.65;"></div>
<div style="position:absolute;left:22.4px;top:138.0px;width:3px;height:3px;background:#e05030;border-radius:1px;opacity:0.65;"></div>
<div style="position:absolute;left:29.1px;top:138.0px;width:3px;height:3px;background:#50a070;border-radius:1px;opacity:0.65;"></div>
<div style="position:absolute;left:35.8px;top:138.0px;width:3px;height:3px;background:#d0a090;border-radius:1px;opacity:0.65;"></div>
<div style="position:absolute;left:42.5px;top:138.0px;width:3px;height:3px;background:#c08060;border-radius:1px;opacity:0.65;"></div>
<div style="position:absolute;left:49.2px;top:138.0px;width:3px;height:3px;background:#a07090;border-radius:1px;opacity:0.65;"></div>
<div style="position:absolute;left:172.0px;top:138.5px;width:2px;height:2px;background:#40a040;opacity:0.6;"></div>
<div style="position:absolute;left:177.5px;top:138.5px;width:2px;height:2px;background:#e0e0e0;opacity:0.6;"></div>
<div style="position:absolute;left:183.0px;top:138.5px;width:2px;height:2px;background:#e04040;opacity:0.6;"></div>
<div style="position:absolute;left:188.5px;top:138.5px;width:2px;height:2px;background:#3070c0;opacity:0.6;"></div>
<div style="position:absolute;left:194.0px;top:138.5px;width:2px;height:2px;background:#50a050;opacity:0.6;"></div>
<div style="position:absolute;left:199.5px;top:138.5px;width:2px;height:2px;background:#888;opacity:0.6;"></div>
<div style="position:absolute;left:205.0px;top:138.5px;width:2px;height:2px;background:#ccc;opacity:0.6;"></div>
<div style="position:absolute;left:210.5px;top:138.5px;width:2px;height:2px;background:#3070c0;opacity:0.6;"></div>
<div style="position:absolute;left:216.0px;top:138.5px;width:2px;height:2px;background:#777;opacity:0.6;"></div>
<div style="position:absolute;left:221.5px;top:138.5px;width:2px;height:2px;background:#888;opacity:0.6;"></div>
<div style="position:absolute;left:227.0px;top:138.5px;width:2px;height:2px;background:#777;opacity:0.6;"></div>
<div style="position:absolute;left:232.5px;top:138.5px;width:2px;height:2px;background:#666;opacity:0.6;"></div>
<div style="position:absolute;left:250.8px;top:5px;width:1.2px;height:132px;background:#3c3c3c;"></div>
<div style="position:absolute;left:91px;top:6px;font-size:6.05px;line-height:1;color:#000;white-space:nowrap;font-family:'Liberation Mono',monospace;">ZHUCHKA (in C major)</div>
<div style="position:absolute;left:204.5px;top:10.9px;font-size:4.95px;line-height:1;color:#2a2a2a;white-space:nowrap;font-family:'Liberation Mono',monospace;font-weight:bold;">Czech folk song</div>
<div style="position:absolute;left:2.6px;top:12.3px;font-size:6px;line-height:1;color:#1a1a1a;white-space:nowrap;font-family:'Liberation Mono',monospace;font-weight:bold;transform:scaleX(0.9);transform-origin:0 0;">Темп</div>
<svg style="position:absolute;left:0px;top:17px" width="18" height="9" viewBox="0 0 18 9"><path d="M8.6 7.8 L1.6 7.8 A7 6.3 0 0 1 5.1 2.3 Z" fill="#f01010" stroke="#f01010" stroke-width="0.8" stroke-linejoin="round"/><path d="M8.6 7.8 L5.1 2.3 A7 6.3 0 0 1 12.1 2.3 Z" fill="#f4f000" stroke="#f4f000" stroke-width="0.8" stroke-linejoin="round"/><path d="M8.6 7.8 L12.1 2.3 A7 6.3 0 0 1 15.6 7.8 Z" fill="#10a818" stroke="#10a818" stroke-width="0.8" stroke-linejoin="round"/><circle cx="12.6" cy="5.6" r="1.3" fill="#0a5a10"/><circle cx="4.6" cy="5.6" r="1.1" fill="#b00808"/></svg>
<svg style="position:absolute;left:0px;top:0px" width="8" height="142" viewBox="0 0 8 142"><circle cx="5.25" cy="29.95" r="1.45" fill="#e00a0a"/><circle cx="3.60" cy="30.90" r="1.45" fill="#e00a0a"/><circle cx="1.95" cy="29.95" r="1.45" fill="#e00a0a"/><circle cx="1.95" cy="28.05" r="1.45" fill="#e00a0a"/><circle cx="3.60" cy="27.10" r="1.45" fill="#e00a0a"/><circle cx="5.25" cy="28.05" r="1.45" fill="#e00a0a"/><circle cx="3.6" cy="29" r="2.2" fill="#e00a0a"/><circle cx="3.6" cy="29" r="0.9" fill="#000" opacity="0.3"/><circle cx="5.25" cy="37.40" r="1.45" fill="#6a10d8"/><circle cx="3.60" cy="38.35" r="1.45" fill="#6a10d8"/><circle cx="1.95" cy="37.40" r="1.45" fill="#6a10d8"/><circle cx="1.95" cy="35.50" r="1.45" fill="#6a10d8"/><circle cx="3.60" cy="34.55" r="1.45" fill="#6a10d8"/><circle cx="5.25" cy="35.50" r="1.45" fill="#6a10d8"/><circle cx="3.6" cy="36.45" r="2.2" fill="#6a10d8"/><circle cx="3.6" cy="36.45" r="0.9" fill="#000" opacity="0.3"/><circle cx="5.25" cy="44.85" r="1.45" fill="#6a10d8"/><circle cx="3.60" cy="45.80" r="1.45" fill="#6a10d8"/><circle cx="1.95" cy="44.85" r="1.45" fill="#6a10d8"/><circle cx="1.95" cy="42.95" r="1.45" fill="#6a10d8"/><circle cx="3.60" cy="42.00" r="1.45" fill="#6a10d8"/><circle cx="5.25" cy="42.95" r="1.45" fill="#6a10d8"/><circle cx="3.6" cy="43.900000000000006" r="2.2" fill="#6a10d8"/><circle cx="3.6" cy="43.900000000000006" r="0.9" fill="#000" opacity="0.3"/><circle cx="5.25" cy="52.30" r="1.45" fill="#6a10d8"/><circle cx="3.60" cy="53.25" r="1.45" fill="#6a10d8"/><circle cx="1.95" cy="52.30" r="1.45" fill="#6a10d8"/><circle cx="1.95" cy="50.40" r="1.45" fill="#6a10d8"/><circle cx="3.60" cy="49.45" r="1.45" fill="#6a10d8"/><circle cx="5.25" cy="50.40" r="1.45" fill="#6a10d8"/><circle cx="3.6" cy="51.35000000000001" r="2.2" fill="#6a10d8"/><circle cx="3.6" cy="51.35000000000001" r="0.9" fill="#000" opacity="0.3"/><circle cx="5.25" cy="59.75" r="1.45" fill="#6a10d8"/><circle cx="3.60" cy="60.70" r="1.45" fill="#6a10d8"/><circle cx="1.95" cy="59.75" r="1.45" fill="#6a10d8"/><circle cx="1.95" cy="57.85" r="1.45" fill="#6a10d8"/><circle cx="3.60" cy="56.90" r="1.45" fill="#6a10d8"/><circle cx="5.25" cy="57.85" r="1.45" fill="#6a10d8"/><circle cx="3.6" cy="58.80000000000001" r="2.2" fill="#6a10d8"/><circle cx="3.6" cy="58.80000000000001" r="0.9" fill="#000" opacity="0.3"/><circle cx="5.25" cy="67.20" r="1.45" fill="#e00a0a"/><circle cx="3.60" cy="68.15" r="1.45" fill="#e00a0a"/><circle cx="1.95" cy="67.20" r="1.45" fill="#e00a0a"/><circle cx="1.95" cy="65.30" r="1.45" fill="#e00a0a"/><circle cx="3.60" cy="64.35" r="1.45" fill="#e00a0a"/><circle cx="5.25" cy="65.30" r="1.45" fill="#e00a0a"/><circle cx="3.6" cy="66.25000000000001" r="2.2" fill="#e00a0a"/><circle cx="3.6" cy="66.25000000000001" r="0.9" fill="#000" opacity="0.3"/><circle cx="5.25" cy="74.65" r="1.45" fill="#6a10d8"/><circle cx="3.60" cy="75.60" r="1.45" fill="#6a10d8"/><circle cx="1.95" cy="74.65" r="1.45" fill="#6a10d8"/><circle cx="1.95" cy="72.75" r="1.45" fill="#6a10d8"/><circle cx="3.60" cy="71.80" r="1.45" fill="#6a10d8"/><circle cx="5.25" cy="72.75" r="1.45" fill="#6a10d8"/><circle cx="3.6" cy="73.70000000000002" r="2.2" fill="#6a10d8"/><circle cx="3.6" cy="73.70000000000002" r="0.9" fill="#000" opacity="0.3"/><circle cx="5.25" cy="82.10" r="1.45" fill="#6a10d8"/><circle cx="3.60" cy="83.05" r="1.45" fill="#6a10d8"/><circle cx="1.95" cy="82.10" r="1.45" fill="#6a10d8"/><circle cx="1.95" cy="80.20" r="1.45" fill="#6a10d8"/><circle cx="3.60" cy="79.25" r="1.45" fill="#6a10d8"/><circle cx="5.25" cy="80.20" r="1.45" fill="#6a10d8"/><circle cx="3.6" cy="81.15000000000002" r="2.2" fill="#6a10d8"/><circle cx="3.6" cy="81.15000000000002" r="0.9" fill="#000" opacity="0.3"/><circle cx="5.25" cy="89.55" r="1.45" fill="#e00a0a"/><circle cx="3.60" cy="90.50" r="1.45" fill="#e00a0a"/><circle cx="1.95" cy="89.55" r="1.45" fill="#e00a0a"/><circle cx="1.95" cy="87.65" r="1.45" fill="#e00a0a"/><circle cx="3.60" cy="86.70" r="1.45" fill="#e00a0a"/><circle cx="5.25" cy="87.65" r="1.45" fill="#e00a0a"/><circle cx="3.6" cy="88.60000000000002" r="2.2" fill="#e00a0a"/><circle cx="3.6" cy="88.60000000000002" r="0.9" fill="#000" opacity="0.3"/><circle cx="5.25" cy="97.00" r="1.45" fill="#e00a0a"/><circle cx="3.60" cy="97.95" r="1.45" fill="#e00a0a"/><circle cx="1.95" cy="97.00" r="1.45" fill="#e00a0a"/><circle cx="1.95" cy="95.10" r="1.45" fill="#e00a0a"/><circle cx="3.60" cy="94.15" r="1.45" fill="#e00a0a"/><circle cx="5.25" cy="95.10" r="1.45" fill="#e00a0a"/><circle cx="3.6" cy="96.05000000000003" r="2.2" fill="#e00a0a"/><circle cx="3.6" cy="96.05000000000003" r="0.9" fill="#000" opacity="0.3"/><circle cx="5.25" cy="104.45" r="1.45" fill="#6a10d8"/><circle cx="3.60" cy="105.40" r="1.45" fill="#6a10d8"/><circle cx="1.95" cy="104.45" r="1.45" fill="#6a10d8"/><circle cx="1.95" cy="102.55" r="1.45" fill="#6a10d8"/><circle cx="3.60" cy="101.60" r="1.45" fill="#6a10d8"/><circle cx="5.25" cy="102.55" r="1.45" fill="#6a10d8"/><circle cx="3.6" cy="103.50000000000003" r="2.2" fill="#6a10d8"/><circle cx="3.6" cy="103.50000000000003" r="0.9" fill="#000" opacity="0.3"/><circle cx="5.25" cy="111.90" r="1.45" fill="#e00a0a"/><circle cx="3.60" cy="112.85" r="1.45" fill="#e00a0a"/><circle cx="1.95" cy="111.90" r="1.45" fill="#e00a0a"/><circle cx="1.95" cy="110.00" r="1.45" fill="#e00a0a"/><circle cx="3.60" cy="109.05" r="1.45" fill="#e00a0a"/><circle cx="5.25" cy="110.00" r="1.45" fill="#e00a0a"/><circle cx="3.6" cy="110.95000000000003" r="2.2" fill="#e00a0a"/><circle cx="3.6" cy="110.95000000000003" r="0.9" fill="#000" opacity="0.3"/><circle cx="5.25" cy="119.35" r="1.45" fill="#6a10d8"/><circle cx="3.60" cy="120.30" r="1.45" fill="#6a10d8"/><circle cx="1.95" cy="119.35" r="1.45" fill="#6a10d8"/><circle cx="1.95" cy="117.45" r="1.45" fill="#6a10d8"/><circle cx="3.60" cy="116.50" r="1.45" fill="#6a10d8"/><circle cx="5.25" cy="117.45" r="1.45" fill="#6a10d8"/><circle cx="3.6" cy="118.40000000000003" r="2.2" fill="#6a10d8"/><circle cx="3.6" cy="118.40000000000003" r="0.9" fill="#000" opacity="0.3"/><circle cx="5.25" cy="126.80" r="1.45" fill="#e00a0a"/><circle cx="3.60" cy="127.75" r="1.45" fill="#e00a0a"/><circle cx="1.95" cy="126.80" r="1.45" fill="#e00a0a"/><circle cx="1.95" cy="124.90" r="1.45" fill="#e00a0a"/><circle cx="3.60" cy="123.95" r="1.45" fill="#e00a0a"/><circle cx="5.25" cy="124.90" r="1.45" fill="#e00a0a"/><circle cx="3.6" cy="125.85000000000004" r="2.2" fill="#e00a0a"/><circle cx="3.6" cy="125.85000000000004" r="0.9" fill="#000" opacity="0.3"/></svg>
<div style="position:absolute;left:17.3px;top:27.0px;width:232px;height:3px;background:#00b000;"></div>
<div style="position:absolute;left:17.3px;top:89.3px;width:232px;height:3px;background:#7f6000;"></div>
<div style="position:absolute;left:17.3px;top:34.05px;width:232px;height:3px;background:#00b000;"></div>
<div style="position:absolute;left:17.3px;top:96.39999999999999px;width:232px;height:3px;background:#7f6000;"></div>
<div style="position:absolute;left:17.3px;top:41.1px;width:232px;height:3px;background:#00b000;"></div>
<div style="position:absolute;left:17.3px;top:103.5px;width:232px;height:3px;background:#7f6000;"></div>
<div style="position:absolute;left:17.3px;top:48.15px;width:232px;height:3px;background:#00b000;"></div>
<div style="position:absolute;left:17.3px;top:110.6px;width:232px;height:3px;background:#7f6000;"></div>
<div style="position:absolute;left:17.3px;top:55.2px;width:232px;height:3px;background:#00b000;"></div>
<div style="position:absolute;left:17.3px;top:117.69999999999999px;width:232px;height:3px;background:#7f6000;"></div>
<svg style="position:absolute;left:17.6px;top:21.8px;overflow:visible" width="13.8" height="40.6" viewBox="0 0 20 60" preserveAspectRatio="none"><path d="M11 40 C7 40 6 35 10 33 C16 31 20 37 19 43 C18 50 12 53 8 52 C2 50 0 44 1 39 C2 32 8 26 12 20 C15 15 15 5 12 1 C10 -1 6 3 6 9 C6 18 10 30 10 40 L10 56 C10 60 5 59 6 56" fill="none" stroke="#2a2a2a" stroke-width="1.88" stroke-linecap="round"/><ellipse cx="6.8" cy="56.5" rx="2.2" ry="1.6" fill="#2a2a2a"/></svg>
<svg style="position:absolute;left:17.4px;top:92.2px;overflow:visible" width="13.8" height="21" viewBox="0 0 20 25" preserveAspectRatio="none"><path d="M2 8.5 C2 2 6 0.5 9 0.5 C14 0.5 17 4 17 9 C17 16 10 22 1 25" fill="none" stroke="#2a2a2a" stroke-width="2.17" stroke-linecap="round"/><ellipse cx="2.6" cy="8.5" rx="2.4" ry="2" fill="#2a2a2a"/><circle cx="19.5" cy="4.5" r="1" fill="#2a2a2a"/><circle cx="19.5" cy="12.8" r="1" fill="#2a2a2a"/></svg>
<div style="position:absolute;left:0.6px;top:126.4px;font-size:11.6px;line-height:1;color:#18b418;white-space:nowrap;font-family:'Liberation Mono',monospace;font-weight:bold;-webkit-text-stroke:0.25px currentColor;transform:scaleX(0.68);transform-origin:0 0;">17</div>
<div style="position:absolute;left:23px;top:132.6px;font-size:5px;line-height:1;color:#1a1a1a;white-space:nowrap;font-family:'Liberation Mono',monospace;font-weight:bold;transform:scaleX(0.85);transform-origin:0 0;">На</div>
<div style="position:absolute;left:31.6px;top:126.4px;font-size:11.6px;line-height:1;color:#bc1c1c;white-space:nowrap;font-family:'Liberation Mono',monospace;font-weight:bold;-webkit-text-stroke:0.25px currentColor;transform:scaleX(0.68);transform-origin:0 0;">18</div>
<div style="position:absolute;left:174.5px;top:129.3px;font-size:7.2px;line-height:1;color:#1c1ce0;white-space:nowrap;font-family:'Liberation Mono',monospace;font-weight:bold;transform:scaleX(0.92);transform-origin:0 0;">F1 - Помощь</div>
<div style="position:absolute;left:225.2px;top:127.4px;width:25.600000000000012px;height:8.3px;background:#fcfbe2;"></div>
<div style="position:absolute;left:231.6px;top:126.7px;font-size:11px;line-height:1;color:#2470a0;white-space:nowrap;font-family:'Liberation Mono',monospace;font-weight:bold;letter-spacing:2px;-webkit-text-stroke:0.25px currentColor;transform:scaleX(0.8);transform-origin:0 0;">17</div>
</div>
<div style="position:absolute;left:326px;top:191px;width:251px;height:142px;overflow:hidden;border-radius:0px 0px 0px 0px;background:#cdcdcd">
<div style="position:absolute;left:0px;top:0px;width:251px;height:5px;background:#0a78d7;"></div>
<div style="position:absolute;left:2px;top:1.2px;width:2.5px;height:2.5px;background:#cfe3f7;"></div>
<div style="position:absolute;left:5.5px;top:2px;width:26px;height:1px;background:rgba(255,255,255,0.25);"></div>
<div style="position:absolute;left:235px;top:2.5px;width:2px;height:1px;background:rgba(255,255,255,0.35);"></div>
<div style="position:absolute;left:240px;top:1.5px;width:2px;height:2px;background:rgba(255,255,255,0.3);"></div>
<div style="position:absolute;left:245px;top:1.5px;width:2px;height:2px;background:rgba(255,255,255,0.3);"></div>
<div style="position:absolute;left:0px;top:136px;width:251px;height:1px;background:#d4dae0;"></div>
<div style="position:absolute;left:0px;top:137px;width:251px;height:5px;background:#1b2026;"></div>
<div style="position:absolute;left:1.5px;top:138.0px;width:3px;height:3px;background:#c8c8c8;"></div>
<div style="position:absolute;left:9.0px;top:138.0px;width:3px;height:3px;background:#8fa89a;border-radius:1px;opacity:0.65;"></div>
<div style="position:absolute;left:15.7px;top:138.0px;width:3px;height:3px;background:#4a8aa0;border-radius:1px;opacity:0.65;"></div>
<div style="position:absolute;left:22.4px;top:138.0px;width:3px;height:3px;background:#e05030;border-radius:1px;opacity:0.65;"></div>
<div style="position:absolute;left:29.1px;top:138.0px;width:3px;height:3px;background:#50a070;border-radius:1px;opacity:0.65;"></div>
<div style="position:absolute;left:35.8px;top:138.0px;width:3px;height:3px;background:#d0a090;border-radius:1px;opacity:0.65;"></div>
<div style="position:absolute;left:42.5px;top:138.0px;width:3px;height:3px;background:#c08060;border-radius:1px;opacity:0.65;"></div>
<div style="position:absolute;left:49.2px;top:138.0px;width:3px;height:3px;background:#a07090;border-radius:1px;opacity:0.65;"></div>
<div style="position:absolute;left:171.0px;top:138.5px;width:2px;height:2px;background:#40a040;opacity:0.6;"></div>
<div style="position:absolute;left:176.5px;top:138.5px;width:2px;height:2px;background:#e0e0e0;opacity:0.6;"></div>
<div style="position:absolute;left:182.0px;top:138.5px;width:2px;height:2px;background:#e04040;opacity:0.6;"></div>
<div style="position:absolute;left:187.5px;top:138.5px;width:2px;height:2px;background:#3070c0;opacity:0.6;"></div>
<div style="position:absolute;left:193.0px;top:138.5px;width:2px;height:2px;background:#50a050;opacity:0.6;"></div>
<div style="position:absolute;left:198.5px;top:138.5px;width:2px;height:2px;background:#888;opacity:0.6;"></div>
<div style="position:absolute;left:204.0px;top:138.5px;width:2px;height:2px;background:#ccc;opacity:0.6;"></div>
<div style="position:absolute;left:209.5px;top:138.5px;width:2px;height:2px;background:#3070c0;opacity:0.6;"></div>
<div style="position:absolute;left:215.0px;top:138.5px;width:2px;height:2px;background:#777;opacity:0.6;"></div>
<div style="position:absolute;left:220.5px;top:138.5px;width:2px;height:2px;background:#888;opacity:0.6;"></div>
<div style="position:absolute;left:226.0px;top:138.5px;width:2px;height:2px;background:#777;opacity:0.6;"></div>
<div style="position:absolute;left:231.5px;top:138.5px;width:2px;height:2px;background:#666;opacity:0.6;"></div>
<div style="position:absolute;left:91px;top:6px;font-size:6.05px;line-height:1;color:#000;white-space:nowrap;font-family:'Liberation Mono',monospace;">ZHUCHKA (in C major)</div>
<div style="position:absolute;left:204.5px;top:10.9px;font-size:4.95px;line-height:1;color:#2a2a2a;white-space:nowrap;font-family:'Liberation Mono',monospace;font-weight:bold;">Czech folk song</div>
<div style="position:absolute;left:2.6px;top:12.3px;font-size:6px;line-height:1;color:#1a1a1a;white-space:nowrap;font-family:'Liberation Mono',monospace;font-weight:bold;transform:scaleX(0.9);transform-origin:0 0;">Темп</div>
<svg style="position:absolute;left:0px;top:17px" width="18" height="9" viewBox="0 0 18 9"><path d="M8.6 7.8 L1.6 7.8 A7 6.3 0 0 1 5.1 2.3 Z" fill="#f01010" stroke="#f01010" stroke-width="0.8" stroke-linejoin="round"/><path d="M8.6 7.8 L5.1 2.3 A7 6.3 0 0 1 12.1 2.3 Z" fill="#f4f000" stroke="#f4f000" stroke-width="0.8" stroke-linejoin="round"/><path d="M8.6 7.8 L12.1 2.3 A7 6.3 0 0 1 15.6 7.8 Z" fill="#10a818" stroke="#10a818" stroke-width="0.8" stroke-linejoin="round"/><circle cx="12.6" cy="5.6" r="1.3" fill="#0a5a10"/><circle cx="4.6" cy="5.6" r="1.1" fill="#b00808"/></svg>
<svg style="position:absolute;left:0px;top:0px" width="8" height="142" viewBox="0 0 8 142"><circle cx="5.25" cy="29.95" r="1.45" fill="#6a10d8"/><circle cx="3.60" cy="30.90" r="1.45" fill="#6a10d8"/><circle cx="1.95" cy="29.95" r="1.45" fill="#6a10d8"/><circle cx="1.95" cy="28.05" r="1.45" fill="#6a10d8"/><circle cx="3.60" cy="27.10" r="1.45" fill="#6a10d8"/><circle cx="5.25" cy="28.05" r="1.45" fill="#6a10d8"/><circle cx="3.6" cy="29" r="2.2" fill="#6a10d8"/><circle cx="3.6" cy="29" r="0.9" fill="#000" opacity="0.3"/><circle cx="5.25" cy="37.40" r="1.45" fill="#e00a0a"/><circle cx="3.60" cy="38.35" r="1.45" fill="#e00a0a"/><circle cx="1.95" cy="37.40" r="1.45" fill="#e00a0a"/><circle cx="1.95" cy="35.50" r="1.45" fill="#e00a0a"/><circle cx="3.60" cy="34.55" r="1.45" fill="#e00a0a"/><circle cx="5.25" cy="35.50" r="1.45" fill="#e00a0a"/><circle cx="3.6" cy="36.45" r="2.2" fill="#e00a0a"/><circle cx="3.6" cy="36.45" r="0.9" fill="#000" opacity="0.3"/><circle cx="5.25" cy="44.85" r="1.45" fill="#6a10d8"/><circle cx="3.60" cy="45.80" r="1.45" fill="#6a10d8"/><circle cx="1.95" cy="44.85" r="1.45" fill="#6a10d8"/><circle cx="1.95" cy="42.95" r="1.45" fill="#6a10d8"/><circle cx="3.60" cy="42.00" r="1.45" fill="#6a10d8"/><circle cx="5.25" cy="42.95" r="1.45" fill="#6a10d8"/><circle cx="3.6" cy="43.900000000000006" r="2.2" fill="#6a10d8"/><circle cx="3.6" cy="43.900000000000006" r="0.9" fill="#000" opacity="0.3"/><circle cx="5.25" cy="52.30" r="1.45" fill="#6a10d8"/><circle cx="3.60" cy="53.25" r="1.45" fill="#6a10d8"/><circle cx="1.95" cy="52.30" r="1.45" fill="#6a10d8"/><circle cx="1.95" cy="50.40" r="1.45" fill="#6a10d8"/><circle cx="3.60" cy="49.45" r="1.45" fill="#6a10d8"/><circle cx="5.25" cy="50.40" r="1.45" fill="#6a10d8"/><circle cx="3.6" cy="51.35000000000001" r="2.2" fill="#6a10d8"/><circle cx="3.6" cy="51.35000000000001" r="0.9" fill="#000" opacity="0.3"/><circle cx="5.25" cy="59.75" r="1.45" fill="#e00a0a"/><circle cx="3.60" cy="60.70" r="1.45" fill="#e00a0a"/><circle cx="1.95" cy="59.75" r="1.45" fill="#e00a0a"/><circle cx="1.95" cy="57.85" r="1.45" fill="#e00a0a"/><circle cx="3.60" cy="56.90" r="1.45" fill="#e00a0a"/><circle cx="5.25" cy="57.85" r="1.45" fill="#e00a0a"/><circle cx="3.6" cy="58.80000000000001" r="2.2" fill="#e00a0a"/><circle cx="3.6" cy="58.80000000000001" r="0.9" fill="#000" opacity="0.3"/><circle cx="5.25" cy="67.20" r="1.45" fill="#e00a0a"/><circle cx="3.60" cy="68.15" r="1.45" fill="#e00a0a"/><circle cx="1.95" cy="67.20" r="1.45" fill="#e00a0a"/><circle cx="1.95" cy="65.30" r="1.45" fill="#e00a0a"/><circle cx="3.60" cy="64.35" r="1.45" fill="#e00a0a"/><circle cx="5.25" cy="65.30" r="1.45" fill="#e00a0a"/><circle cx="3.6" cy="66.25000000000001" r="2.2" fill="#e00a0a"/><circle cx="3.6" cy="66.25000000000001" r="0.9" fill="#000" opacity="0.3"/><circle cx="5.25" cy="74.65" r="1.45" fill="#6a10d8"/><circle cx="3.60" cy="75.60" r="1.45" fill="#6a10d8"/><circle cx="1.95" cy="74.65" r="1.45" fill="#6a10d8"/><circle cx="1.95" cy="72.75" r="1.45" fill="#6a10d8"/><circle cx="3.60" cy="71.80" r="1.45" fill="#6a10d8"/><circle cx="5.25" cy="72.75" r="1.45" fill="#6a10d8"/><circle cx="3.6" cy="73.70000000000002" r="2.2" fill="#6a10d8"/><circle cx="3.6" cy="73.70000000000002" r="0.9" fill="#000" opacity="0.3"/><circle cx="5.25" cy="82.10" r="1.45" fill="#6a10d8"/><circle cx="3.60" cy="83.05" r="1.45" fill="#6a10d8"/><circle cx="1.95" cy="82.10" r="1.45" fill="#6a10d8"/><circle cx="1.95" cy="80.20" r="1.45" fill="#6a10d8"/><circle cx="3.60" cy="79.25" r="1.45" fill="#6a10d8"/><circle cx="5.25" cy="80.20" r="1.45" fill="#6a10d8"/><circle cx="3.6" cy="81.15000000000002" r="2.2" fill="#6a10d8"/><circle cx="3.6" cy="81.15000000000002" r="0.9" fill="#000" opacity="0.3"/><circle cx="5.25" cy="89.55" r="1.45" fill="#e00a0a"/><circle cx="3.60" cy="90.50" r="1.45" fill="#e00a0a"/><circle cx="1.95" cy="89.55" r="1.45" fill="#e00a0a"/><circle cx="1.95" cy="87.65" r="1.45" fill="#e00a0a"/><circle cx="3.60" cy="86.70" r="1.45" fill="#e00a0a"/><circle cx="5.25" cy="87.65" r="1.45" fill="#e00a0a"/><circle cx="3.6" cy="88.60000000000002" r="2.2" fill="#e00a0a"/><circle cx="3.6" cy="88.60000000000002" r="0.9" fill="#000" opacity="0.3"/><circle cx="5.25" cy="97.00" r="1.45" fill="#e00a0a"/><circle cx="3.60" cy="97.95" r="1.45" fill="#e00a0a"/><circle cx="1.95" cy="97.00" r="1.45" fill="#e00a0a"/><circle cx="1.95" cy="95.10" r="1.45" fill="#e00a0a"/><circle cx="3.60" cy="94.15" r="1.45" fill="#e00a0a"/><circle cx="5.25" cy="95.10" r="1.45" fill="#e00a0a"/><circle cx="3.6" cy="96.05000000000003" r="2.2" fill="#e00a0a"/><circle cx="3.6" cy="96.05000000000003" r="0.9" fill="#000" opacity="0.3"/><circle cx="5.25" cy="104.45" r="1.45" fill="#6a10d8"/><circle cx="3.60" cy="105.40" r="1.45" fill="#6a10d8"/><circle cx="1.95" cy="104.45" r="1.45" fill="#6a10d8"/><circle cx="1.95" cy="102.55" r="1.45" fill="#6a10d8"/><circle cx="3.60" cy="101.60" r="1.45" fill="#6a10d8"/><circle cx="5.25" cy="102.55" r="1.45" fill="#6a10d8"/><circle cx="3.6" cy="103.50000000000003" r="2.2" fill="#6a10d8"/><circle cx="3.6" cy="103.50000000000003" r="0.9" fill="#000" opacity="0.3"/><circle cx="5.25" cy="111.90" r="1.45" fill="#6a10d8"/><circle cx="3.60" cy="112.85" r="1.45" fill="#6a10d8"/><circle cx="1.95" cy="111.90" r="1.45" fill="#6a10d8"/><circle cx="1.95" cy="110.00" r="1.45" fill="#6a10d8"/><circle cx="3.60" cy="109.05" r="1.45" fill="#6a10d8"/><circle cx="5.25" cy="110.00" r="1.45" fill="#6a10d8"/><circle cx="3.6" cy="110.95000000000003" r="2.2" fill="#6a10d8"/><circle cx="3.6" cy="110.95000000000003" r="0.9" fill="#000" opacity="0.3"/><circle cx="5.25" cy="119.35" r="1.45" fill="#6a10d8"/><circle cx="3.60" cy="120.30" r="1.45" fill="#6a10d8"/><circle cx="1.95" cy="119.35" r="1.45" fill="#6a10d8"/><circle cx="1.95" cy="117.45" r="1.45" fill="#6a10d8"/><circle cx="3.60" cy="116.50" r="1.45" fill="#6a10d8"/><circle cx="5.25" cy="117.45" r="1.45" fill="#6a10d8"/><circle cx="3.6" cy="118.40000000000003" r="2.2" fill="#6a10d8"/><circle cx="3.6" cy="118.40000000000003" r="0.9" fill="#000" opacity="0.3"/><circle cx="5.25" cy="126.80" r="1.45" fill="#6a10d8"/><circle cx="3.60" cy="127.75" r="1.45" fill="#6a10d8"/><circle cx="1.95" cy="126.80" r="1.45" fill="#6a10d8"/><circle cx="1.95" cy="124.90" r="1.45" fill="#6a10d8"/><circle cx="3.60" cy="123.95" r="1.45" fill="#6a10d8"/><circle cx="5.25" cy="124.90" r="1.45" fill="#6a10d8"/><circle cx="3.6" cy="125.85000000000004" r="2.2" fill="#6a10d8"/><circle cx="3.6" cy="125.85000000000004" r="0.9" fill="#000" opacity="0.3"/></svg>
<div style="position:absolute;left:17.3px;top:27.0px;width:232px;height:3px;background:#00b000;"></div>
<div style="position:absolute;left:17.3px;top:89.3px;width:232px;height:3px;background:#7f6000;"></div>
<div style="position:absolute;left:17.3px;top:34.05px;width:232px;height:3px;background:#00b000;"></div>
<div style="position:absolute;left:17.3px;top:96.39999999999999px;width:232px;height:3px;background:#7f6000;"></div>
<div style="position:absolute;left:17.3px;top:41.1px;width:232px;height:3px;background:#00b000;"></div>
<div style="position:absolute;left:17.3px;top:103.5px;width:232px;height:3px;background:#7f6000;"></div>
<div style="position:absolute;left:17.3px;top:48.15px;width:232px;height:3px;background:#00b000;"></div>
<div style="position:absolute;left:17.3px;top:110.6px;width:232px;height:3px;background:#7f6000;"></div>
<div style="position:absolute;left:17.3px;top:55.2px;width:232px;height:3px;background:#00b000;"></div>
<div style="position:absolute;left:17.3px;top:117.69999999999999px;width:232px;height:3px;background:#7f6000;"></div>
<svg style="position:absolute;left:17.6px;top:21.8px;overflow:visible" width="13.8" height="40.6" viewBox="0 0 20 60" preserveAspectRatio="none"><path d="M11 40 C7 40 6 35 10 33 C16 31 20 37 19 43 C18 50 12 53 8 52 C2 50 0 44 1 39 C2 32 8 26 12 20 C15 15 15 5 12 1 C10 -1 6 3 6 9 C6 18 10 30 10 40 L10 56 C10 60 5 59 6 56" fill="none" stroke="#2a2a2a" stroke-width="1.88" stroke-linecap="round"/><ellipse cx="6.8" cy="56.5" rx="2.2" ry="1.6" fill="#2a2a2a"/></svg>
<svg style="position:absolute;left:17.4px;top:92.2px;overflow:visible" width="13.8" height="21" viewBox="0 0 20 25" preserveAspectRatio="none"><path d="M2 8.5 C2 2 6 0.5 9 0.5 C14 0.5 17 4 17 9 C17 16 10 22 1 25" fill="none" stroke="#2a2a2a" stroke-width="2.17" stroke-linecap="round"/><ellipse cx="2.6" cy="8.5" rx="2.4" ry="2" fill="#2a2a2a"/><circle cx="19.5" cy="4.5" r="1" fill="#2a2a2a"/><circle cx="19.5" cy="12.8" r="1" fill="#2a2a2a"/></svg>
<div style="position:absolute;left:0.6px;top:126.4px;font-size:11.6px;line-height:1;color:#18b418;white-space:nowrap;font-family:'Liberation Mono',monospace;font-weight:bold;-webkit-text-stroke:0.25px currentColor;transform:scaleX(0.68);transform-origin:0 0;">16</div>
<div style="position:absolute;left:23px;top:132.6px;font-size:5px;line-height:1;color:#1a1a1a;white-space:nowrap;font-family:'Liberation Mono',monospace;font-weight:bold;transform:scaleX(0.85);transform-origin:0 0;">На</div>
<div style="position:absolute;left:31.6px;top:126.4px;font-size:11.6px;line-height:1;color:#bc1c1c;white-space:nowrap;font-family:'Liberation Mono',monospace;font-weight:bold;-webkit-text-stroke:0.25px currentColor;transform:scaleX(0.68);transform-origin:0 0;">16</div>
<div style="position:absolute;left:174.5px;top:129.3px;font-size:7.2px;line-height:1;color:#1c1ce0;white-space:nowrap;font-family:'Liberation Mono',monospace;font-weight:bold;transform:scaleX(0.92);transform-origin:0 0;">F1 - Помощь</div>
<div style="position:absolute;left:225.2px;top:127.4px;width:25.80000000000001px;height:8.3px;background:#fcfbe2;"></div>
<div style="position:absolute;left:231.6px;top:126.7px;font-size:11px;line-height:1;color:#2470a0;white-space:nowrap;font-family:'Liberation Mono',monospace;font-weight:bold;letter-spacing:2px;-webkit-text-stroke:0.25px currentColor;transform:scaleX(0.8);transform-origin:0 0;">11_</div>
</div>
<div style="position:absolute;left:69px;top:338px;width:252px;height:141px;overflow:hidden;border-radius:0px 0px 0px 14px;background:#cdcdcd">
<div style="position:absolute;left:0px;top:0px;width:252px;height:4px;background:#0a78d7;"></div>
<div style="position:absolute;left:2px;top:1.2px;width:2.5px;height:2.5px;background:#cfe3f7;"></div>
<div style="position:absolute;left:5.5px;top:2px;width:26px;height:1px;background:rgba(255,255,255,0.25);"></div>
<div style="position:absolute;left:236px;top:2.5px;width:2px;height:1px;background:rgba(255,255,255,0.35);"></div>
<div style="position:absolute;left:241px;top:1.5px;width:2px;height:2px;background:rgba(255,255,255,0.3);"></div>
<div style="position:absolute;left:246px;top:1.5px;width:2px;height:2px;background:rgba(255,255,255,0.3);"></div>
<div style="position:absolute;left:0px;top:136px;width:252px;height:1px;background:#d4dae0;"></div>
<div style="position:absolute;left:0px;top:137px;width:252px;height:4px;background:#1b2026;"></div>
<div style="position:absolute;left:1.5px;top:137.5px;width:3px;height:3px;background:#c8c8c8;"></div>
<div style="position:absolute;left:9.0px;top:137.5px;width:3px;height:3px;background:#8fa89a;border-radius:1px;opacity:0.65;"></div>
<div style="position:absolute;left:15.7px;top:137.5px;width:3px;height:3px;background:#4a8aa0;border-radius:1px;opacity:0.65;"></div>
<div style="position:absolute;left:22.4px;top:137.5px;width:3px;height:3px;background:#e05030;border-radius:1px;opacity:0.65;"></div>
<div style="position:absolute;left:29.1px;top:137.5px;width:3px;height:3px;background:#50a070;border-radius:1px;opacity:0.65;"></div>
<div style="position:absolute;left:35.8px;top:137.5px;width:3px;height:3px;background:#d0a090;border-radius:1px;opacity:0.65;"></div>
<div style="position:absolute;left:42.5px;top:137.5px;width:3px;height:3px;background:#c08060;border-radius:1px;opacity:0.65;"></div>
<div style="position:absolute;left:49.2px;top:137.5px;width:3px;height:3px;background:#a07090;border-radius:1px;opacity:0.65;"></div>
<div style="position:absolute;left:172.0px;top:138.0px;width:2px;height:2px;background:#40a040;opacity:0.6;"></div>
<div style="position:absolute;left:177.5px;top:138.0px;width:2px;height:2px;background:#e0e0e0;opacity:0.6;"></div>
<div style="position:absolute;left:183.0px;top:138.0px;width:2px;height:2px;background:#e04040;opacity:0.6;"></div>
<div style="position:absolute;left:188.5px;top:138.0px;width:2px;height:2px;background:#3070c0;opacity:0.6;"></div>
<div style="position:absolute;left:194.0px;top:138.0px;width:2px;height:2px;background:#50a050;opacity:0.6;"></div>
<div style="position:absolute;left:199.5px;top:138.0px;width:2px;height:2px;background:#888;opacity:0.6;"></div>
<div style="position:absolute;left:205.0px;top:138.0px;width:2px;height:2px;background:#ccc;opacity:0.6;"></div>
<div style="position:absolute;left:210.5px;top:138.0px;width:2px;height:2px;background:#3070c0;opacity:0.6;"></div>
<div style="position:absolute;left:216.0px;top:138.0px;width:2px;height:2px;background:#777;opacity:0.6;"></div>
<div style="position:absolute;left:221.5px;top:138.0px;width:2px;height:2px;background:#888;opacity:0.6;"></div>
<div style="position:absolute;left:227.0px;top:138.0px;width:2px;height:2px;background:#777;opacity:0.6;"></div>
<div style="position:absolute;left:232.5px;top:138.0px;width:2px;height:2px;background:#666;opacity:0.6;"></div>
<div style="position:absolute;left:250.8px;top:4px;width:1.2px;height:133px;background:#3c3c3c;"></div>
<div style="position:absolute;left:91px;top:5.3px;font-size:6.05px;line-height:1;color:#000;white-space:nowrap;font-family:'Liberation Mono',monospace;">ZHUCHKA (in C major)</div>
<div style="position:absolute;left:204.5px;top:10.799999999999999px;font-size:4.95px;line-height:1;color:#2a2a2a;white-space:nowrap;font-family:'Liberation Mono',monospace;font-weight:bold;">Czech folk song</div>
<div style="position:absolute;left:2.6px;top:11.3px;font-size:6px;line-height:1;color:#1a1a1a;white-space:nowrap;font-family:'Liberation Mono',monospace;font-weight:bold;transform:scaleX(0.9);transform-origin:0 0;">Темп</div>
<svg style="position:absolute;left:0px;top:16px" width="18" height="9" viewBox="0 0 18 9"><path d="M8.6 7.8 L1.6 7.8 A7 6.3 0 0 1 5.1 2.3 Z" fill="#f01010" stroke="#f01010" stroke-width="0.8" stroke-linejoin="round"/><path d="M8.6 7.8 L5.1 2.3 A7 6.3 0 0 1 12.1 2.3 Z" fill="#f4f000" stroke="#f4f000" stroke-width="0.8" stroke-linejoin="round"/><path d="M8.6 7.8 L12.1 2.3 A7 6.3 0 0 1 15.6 7.8 Z" fill="#10a818" stroke="#10a818" stroke-width="0.8" stroke-linejoin="round"/><circle cx="12.6" cy="5.6" r="1.3" fill="#0a5a10"/><circle cx="4.6" cy="5.6" r="1.1" fill="#b00808"/></svg>
<svg style="position:absolute;left:0px;top:0px" width="8" height="141" viewBox="0 0 8 141"><circle cx="5.25" cy="28.95" r="1.45" fill="#e00a0a"/><circle cx="3.60" cy="29.90" r="1.45" fill="#e00a0a"/><circle cx="1.95" cy="28.95" r="1.45" fill="#e00a0a"/><circle cx="1.95" cy="27.05" r="1.45" fill="#e00a0a"/><circle cx="3.60" cy="26.10" r="1.45" fill="#e00a0a"/><circle cx="5.25" cy="27.05" r="1.45" fill="#e00a0a"/><circle cx="3.6" cy="28" r="2.2" fill="#e00a0a"/><circle cx="3.6" cy="28" r="0.9" fill="#000" opacity="0.3"/><circle cx="5.25" cy="36.40" r="1.45" fill="#6a10d8"/><circle cx="3.60" cy="37.35" r="1.45" fill="#6a10d8"/><circle cx="1.95" cy="36.40" r="1.45" fill="#6a10d8"/><circle cx="1.95" cy="34.50" r="1.45" fill="#6a10d8"/><circle cx="3.60" cy="33.55" r="1.45" fill="#6a10d8"/><circle cx="5.25" cy="34.50" r="1.45" fill="#6a10d8"/><circle cx="3.6" cy="35.45" r="2.2" fill="#6a10d8"/><circle cx="3.6" cy="35.45" r="0.9" fill="#000" opacity="0.3"/><circle cx="5.25" cy="43.85" r="1.45" fill="#e00a0a"/><circle cx="3.60" cy="44.80" r="1.45" fill="#e00a0a"/><circle cx="1.95" cy="43.85" r="1.45" fill="#e00a0a"/><circle cx="1.95" cy="41.95" r="1.45" fill="#e00a0a"/><circle cx="3.60" cy="41.00" r="1.45" fill="#e00a0a"/><circle cx="5.25" cy="41.95" r="1.45" fill="#e00a0a"/><circle cx="3.6" cy="42.900000000000006" r="2.2" fill="#e00a0a"/><circle cx="3.6" cy="42.900000000000006" r="0.9" fill="#000" opacity="0.3"/><circle cx="5.25" cy="51.30" r="1.45" fill="#6a10d8"/><circle cx="3.60" cy="52.25" r="1.45" fill="#6a10d8"/><circle cx="1.95" cy="51.30" r="1.45" fill="#6a10d8"/><circle cx="1.95" cy="49.40" r="1.45" fill="#6a10d8"/><circle cx="3.60" cy="48.45" r="1.45" fill="#6a10d8"/><circle cx="5.25" cy="49.40" r="1.45" fill="#6a10d8"/><circle cx="3.6" cy="50.35000000000001" r="2.2" fill="#6a10d8"/><circle cx="3.6" cy="50.35000000000001" r="0.9" fill="#000" opacity="0.3"/><circle cx="5.25" cy="58.75" r="1.45" fill="#e00a0a"/><circle cx="3.60" cy="59.70" r="1.45" fill="#e00a0a"/><circle cx="1.95" cy="58.75" r="1.45" fill="#e00a0a"/><circle cx="1.95" cy="56.85" r="1.45" fill="#e00a0a"/><circle cx="3.60" cy="55.90" r="1.45" fill="#e00a0a"/><circle cx="5.25" cy="56.85" r="1.45" fill="#e00a0a"/><circle cx="3.6" cy="57.80000000000001" r="2.2" fill="#e00a0a"/><circle cx="3.6" cy="57.80000000000001" r="0.9" fill="#000" opacity="0.3"/><circle cx="5.25" cy="66.20" r="1.45" fill="#6a10d8"/><circle cx="3.60" cy="67.15" r="1.45" fill="#6a10d8"/><circle cx="1.95" cy="66.20" r="1.45" fill="#6a10d8"/><circle cx="1.95" cy="64.30" r="1.45" fill="#6a10d8"/><circle cx="3.60" cy="63.35" r="1.45" fill="#6a10d8"/><circle cx="5.25" cy="64.30" r="1.45" fill="#6a10d8"/><circle cx="3.6" cy="65.25000000000001" r="2.2" fill="#6a10d8"/><circle cx="3.6" cy="65.25000000000001" r="0.9" fill="#000" opacity="0.3"/><circle cx="5.25" cy="73.65" r="1.45" fill="#6a10d8"/><circle cx="3.60" cy="74.60" r="1.45" fill="#6a10d8"/><circle cx="1.95" cy="73.65" r="1.45" fill="#6a10d8"/><circle cx="1.95" cy="71.75" r="1.45" fill="#6a10d8"/><circle cx="3.60" cy="70.80" r="1.45" fill="#6a10d8"/><circle cx="5.25" cy="71.75" r="1.45" fill="#6a10d8"/><circle cx="3.6" cy="72.70000000000002" r="2.2" fill="#6a10d8"/><circle cx="3.6" cy="72.70000000000002" r="0.9" fill="#000" opacity="0.3"/><circle cx="5.25" cy="81.10" r="1.45" fill="#e00a0a"/><circle cx="3.60" cy="82.05" r="1.45" fill="#e00a0a"/><circle cx="1.95" cy="81.10" r="1.45" fill="#e00a0a"/><circle cx="1.95" cy="79.20" r="1.45" fill="#e00a0a"/><circle cx="3.60" cy="78.25" r="1.45" fill="#e00a0a"/><circle cx="5.25" cy="79.20" r="1.45" fill="#e00a0a"/><circle cx="3.6" cy="80.15000000000002" r="2.2" fill="#e00a0a"/><circle cx="3.6" cy="80.15000000000002" r="0.9" fill="#000" opacity="0.3"/><circle cx="5.25" cy="88.55" r="1.45" fill="#6a10d8"/><circle cx="3.60" cy="89.50" r="1.45" fill="#6a10d8"/><circle cx="1.95" cy="88.55" r="1.45" fill="#6a10d8"/><circle cx="1.95" cy="86.65" r="1.45" fill="#6a10d8"/><circle cx="3.60" cy="85.70" r="1.45" fill="#6a10d8"/><circle cx="5.25" cy="86.65" r="1.45" fill="#6a10d8"/><circle cx="3.6" cy="87.60000000000002" r="2.2" fill="#6a10d8"/><circle cx="3.6" cy="87.60000000000002" r="0.9" fill="#000" opacity="0.3"/><circle cx="5.25" cy="96.00" r="1.45" fill="#6a10d8"/><circle cx="3.60" cy="96.95" r="1.45" fill="#6a10d8"/><circle cx="1.95" cy="96.00" r="1.45" fill="#6a10d8"/><circle cx="1.95" cy="94.10" r="1.45" fill="#6a10d8"/><circle cx="3.60" cy="93.15" r="1.45" fill="#6a10d8"/><circle cx="5.25" cy="94.10" r="1.45" fill="#6a10d8"/><circle cx="3.6" cy="95.05000000000003" r="2.2" fill="#6a10d8"/><circle cx="3.6" cy="95.05000000000003" r="0.9" fill="#000" opacity="0.3"/><circle cx="5.25" cy="103.45" r="1.45" fill="#6a10d8"/><circle cx="3.60" cy="104.40" r="1.45" fill="#6a10d8"/><circle cx="1.95" cy="103.45" r="1.45" fill="#6a10d8"/><circle cx="1.95" cy="101.55" r="1.45" fill="#6a10d8"/><circle cx="3.60" cy="100.60" r="1.45" fill="#6a10d8"/><circle cx="5.25" cy="101.55" r="1.45" fill="#6a10d8"/><circle cx="3.6" cy="102.50000000000003" r="2.2" fill="#6a10d8"/><circle cx="3.6" cy="102.50000000000003" r="0.9" fill="#000" opacity="0.3"/><circle cx="5.25" cy="110.90" r="1.45" fill="#e00a0a"/><circle cx="3.60" cy="111.85" r="1.45" fill="#e00a0a"/><circle cx="1.95" cy="110.90" r="1.45" fill="#e00a0a"/><circle cx="1.95" cy="109.00" r="1.45" fill="#e00a0a"/><circle cx="3.60" cy="108.05" r="1.45" fill="#e00a0a"/><circle cx="5.25" cy="109.00" r="1.45" fill="#e00a0a"/><circle cx="3.6" cy="109.95000000000003" r="2.2" fill="#e00a0a"/><circle cx="3.6" cy="109.95000000000003" r="0.9" fill="#000" opacity="0.3"/><circle cx="5.25" cy="118.35" r="1.45" fill="#6a10d8"/><circle cx="3.60" cy="119.30" r="1.45" fill="#6a10d8"/><circle cx="1.95" cy="118.35" r="1.45" fill="#6a10d8"/><circle cx="1.95" cy="116.45" r="1.45" fill="#6a10d8"/><circle cx="3.60" cy="115.50" r="1.45" fill="#6a10d8"/><circle cx="5.25" cy="116.45" r="1.45" fill="#6a10d8"/><circle cx="3.6" cy="117.40000000000003" r="2.2" fill="#6a10d8"/><circle cx="3.6" cy="117.40000000000003" r="0.9" fill="#000" opacity="0.3"/><circle cx="5.25" cy="125.80" r="1.45" fill="#e00a0a"/><circle cx="3.60" cy="126.75" r="1.45" fill="#e00a0a"/><circle cx="1.95" cy="125.80" r="1.45" fill="#e00a0a"/><circle cx="1.95" cy="123.90" r="1.45" fill="#e00a0a"/><circle cx="3.60" cy="122.95" r="1.45" fill="#e00a0a"/><circle cx="5.25" cy="123.90" r="1.45" fill="#e00a0a"/><circle cx="3.6" cy="124.85000000000004" r="2.2" fill="#e00a0a"/><circle cx="3.6" cy="124.85000000000004" r="0.9" fill="#000" opacity="0.3"/></svg>
<div style="position:absolute;left:17px;top:26.8px;width:232px;height:1.3px;background:#333;"></div>
<div style="position:absolute;left:17px;top:89.6px;width:232px;height:1.3px;background:#333;"></div>
<div style="position:absolute;left:17px;top:33.78px;width:232px;height:1.3px;background:#333;"></div>
<div style="position:absolute;left:17px;top:96.6px;width:232px;height:1.3px;background:#333;"></div>
<div style="position:absolute;left:17px;top:40.760000000000005px;width:232px;height:1.3px;background:#333;"></div>
<div style="position:absolute;left:17px;top:103.6px;width:232px;height:1.3px;background:#333;"></div>
<div style="position:absolute;left:17px;top:47.74px;width:232px;height:1.3px;background:#333;"></div>
<div style="position:absolute;left:17px;top:110.6px;width:232px;height:1.3px;background:#333;"></div>
<div style="position:absolute;left:17px;top:54.72px;width:232px;height:1.3px;background:#333;"></div>
<div style="position:absolute;left:17px;top:117.6px;width:232px;height:1.3px;background:#333;"></div>
<div style="position:absolute;left:48.2px;top:26.8px;width:1.2px;height:92.2px;background:#333;"></div>
<div style="position:absolute;left:50.2px;top:26.8px;width:1.9px;height:92.2px;background:#333;"></div>
<svg style="position:absolute;left:17.6px;top:21.2px;overflow:visible" width="13.6" height="40.8" viewBox="0 0 20 60" preserveAspectRatio="none"><path d="M11 40 C7 40 6 35 10 33 C16 31 20 37 19 43 C18 50 12 53 8 52 C2 50 0 44 1 39 C2 32 8 26 12 20 C15 15 15 5 12 1 C10 -1 6 3 6 9 C6 18 10 30 10 40 L10 56 C10 60 5 59 6 56" fill="none" stroke="#333" stroke-width="1.76" stroke-linecap="round"/><ellipse cx="6.8" cy="56.5" rx="2.2" ry="1.6" fill="#333"/></svg>
<svg style="position:absolute;left:17.5px;top:90.5px;overflow:visible" width="13.5" height="21" viewBox="0 0 20 25" preserveAspectRatio="none"><path d="M2 8.5 C2 2 6 0.5 9 0.5 C14 0.5 17 4 17 9 C17 16 10 22 1 25" fill="none" stroke="#333" stroke-width="2.07" stroke-linecap="round"/><ellipse cx="2.6" cy="8.5" rx="2.4" ry="2" fill="#333"/><circle cx="19.5" cy="4.5" r="1" fill="#333"/><circle cx="19.5" cy="12.8" r="1" fill="#333"/></svg>
<div style="position:absolute;left:0.6px;top:126.4px;font-size:11.6px;line-height:1;color:#18b418;white-space:nowrap;font-family:'Liberation Mono',monospace;font-weight:bold;-webkit-text-stroke:0.25px currentColor;transform:scaleX(0.68);transform-origin:0 0;">33</div>
<div style="position:absolute;left:23px;top:132.6px;font-size:5px;line-height:1;color:#1a1a1a;white-space:nowrap;font-family:'Liberation Mono',monospace;font-weight:bold;transform:scaleX(0.85);transform-origin:0 0;">На</div>
<div style="position:absolute;left:31.6px;top:126.4px;font-size:11.6px;line-height:1;color:#bc1c1c;white-space:nowrap;font-family:'Liberation Mono',monospace;font-weight:bold;-webkit-text-stroke:0.25px currentColor;transform:scaleX(0.68);transform-origin:0 0;">34</div>
<div style="position:absolute;left:174.5px;top:129.3px;font-size:7.2px;line-height:1;color:#1c1ce0;white-space:nowrap;font-family:'Liberation Mono',monospace;font-weight:bold;transform:scaleX(0.92);transform-origin:0 0;">F1 - Помощь</div>
<div style="position:absolute;left:225.2px;top:127.4px;width:25.600000000000012px;height:8.3px;background:#fcfbe2;"></div>
<div style="position:absolute;left:231.6px;top:126.7px;font-size:11px;line-height:1;color:#2470a0;white-space:nowrap;font-family:'Liberation Mono',monospace;font-weight:bold;letter-spacing:2px;-webkit-text-stroke:0.25px currentColor;transform:scaleX(0.8);transform-origin:0 0;">56</div>
</div>
<div style="position:absolute;left:326px;top:338px;width:251px;height:141px;overflow:hidden;border-radius:0px 0px 14px 0px;background:#cdcdcd">
<div style="position:absolute;left:0px;top:0px;width:251px;height:4px;background:#0a78d7;"></div>
<div style="position:absolute;left:2px;top:1.2px;width:2.5px;height:2.5px;background:#cfe3f7;"></div>
<div style="position:absolute;left:5.5px;top:2px;width:26px;height:1px;background:rgba(255,255,255,0.25);"></div>
<div style="position:absolute;left:235px;top:2.5px;width:2px;height:1px;background:rgba(255,255,255,0.35);"></div>
<div style="position:absolute;left:240px;top:1.5px;width:2px;height:2px;background:rgba(255,255,255,0.3);"></div>
<div style="position:absolute;left:245px;top:1.5px;width:2px;height:2px;background:rgba(255,255,255,0.3);"></div>
<div style="position:absolute;left:0px;top:136px;width:251px;height:1px;background:#d4dae0;"></div>
<div style="position:absolute;left:0px;top:137px;width:251px;height:4px;background:#1b2026;"></div>
<div style="position:absolute;left:1.5px;top:137.5px;width:3px;height:3px;background:#c8c8c8;"></div>
<div style="position:absolute;left:9.0px;top:137.5px;width:3px;height:3px;background:#8fa89a;border-radius:1px;opacity:0.65;"></div>
<div style="position:absolute;left:15.7px;top:137.5px;width:3px;height:3px;background:#4a8aa0;border-radius:1px;opacity:0.65;"></div>
<div style="position:absolute;left:22.4px;top:137.5px;width:3px;height:3px;background:#e05030;border-radius:1px;opacity:0.65;"></div>
<div style="position:absolute;left:29.1px;top:137.5px;width:3px;height:3px;background:#50a070;border-radius:1px;opacity:0.65;"></div>
<div style="position:absolute;left:35.8px;top:137.5px;width:3px;height:3px;background:#d0a090;border-radius:1px;opacity:0.65;"></div>
<div style="position:absolute;left:42.5px;top:137.5px;width:3px;height:3px;background:#c08060;border-radius:1px;opacity:0.65;"></div>
<div style="position:absolute;left:49.2px;top:137.5px;width:3px;height:3px;background:#a07090;border-radius:1px;opacity:0.65;"></div>
<div style="position:absolute;left:171.0px;top:138.0px;width:2px;height:2px;background:#40a040;opacity:0.6;"></div>
<div style="position:absolute;left:176.5px;top:138.0px;width:2px;height:2px;background:#e0e0e0;opacity:0.6;"></div>
<div style="position:absolute;left:182.0px;top:138.0px;width:2px;height:2px;background:#e04040;opacity:0.6;"></div>
<div style="position:absolute;left:187.5px;top:138.0px;width:2px;height:2px;background:#3070c0;opacity:0.6;"></div>
<div style="position:absolute;left:193.0px;top:138.0px;width:2px;height:2px;background:#50a050;opacity:0.6;"></div>
<div style="position:absolute;left:198.5px;top:138.0px;width:2px;height:2px;background:#888;opacity:0.6;"></div>
<div style="position:absolute;left:204.0px;top:138.0px;width:2px;height:2px;background:#ccc;opacity:0.6;"></div>
<div style="position:absolute;left:209.5px;top:138.0px;width:2px;height:2px;background:#3070c0;opacity:0.6;"></div>
<div style="position:absolute;left:215.0px;top:138.0px;width:2px;height:2px;background:#777;opacity:0.6;"></div>
<div style="position:absolute;left:220.5px;top:138.0px;width:2px;height:2px;background:#888;opacity:0.6;"></div>
<div style="position:absolute;left:226.0px;top:138.0px;width:2px;height:2px;background:#777;opacity:0.6;"></div>
<div style="position:absolute;left:231.5px;top:138.0px;width:2px;height:2px;background:#666;opacity:0.6;"></div>
<div style="position:absolute;left:91px;top:5.3px;font-size:6.05px;line-height:1;color:#000;white-space:nowrap;font-family:'Liberation Mono',monospace;">ZHUCHKA (in C major)</div>
<div style="position:absolute;left:204.5px;top:10.799999999999999px;font-size:4.95px;line-height:1;color:#2a2a2a;white-space:nowrap;font-family:'Liberation Mono',monospace;font-weight:bold;">Czech folk song</div>
<svg style="position:absolute;left:0px;top:0px" width="8" height="141" viewBox="0 0 8 141"><circle cx="5.25" cy="19.45" r="1.45" fill="#e00a0a"/><circle cx="3.60" cy="20.40" r="1.45" fill="#e00a0a"/><circle cx="1.95" cy="19.45" r="1.45" fill="#e00a0a"/><circle cx="1.95" cy="17.55" r="1.45" fill="#e00a0a"/><circle cx="3.60" cy="16.60" r="1.45" fill="#e00a0a"/><circle cx="5.25" cy="17.55" r="1.45" fill="#e00a0a"/><circle cx="3.6" cy="18.5" r="2.2" fill="#e00a0a"/><circle cx="3.6" cy="18.5" r="0.9" fill="#000" opacity="0.3"/><circle cx="5.25" cy="26.90" r="1.45" fill="#6a10d8"/><circle cx="3.60" cy="27.85" r="1.45" fill="#6a10d8"/><circle cx="1.95" cy="26.90" r="1.45" fill="#6a10d8"/><circle cx="1.95" cy="25.00" r="1.45" fill="#6a10d8"/><circle cx="3.60" cy="24.05" r="1.45" fill="#6a10d8"/><circle cx="5.25" cy="25.00" r="1.45" fill="#6a10d8"/><circle cx="3.6" cy="25.95" r="2.2" fill="#6a10d8"/><circle cx="3.6" cy="25.95" r="0.9" fill="#000" opacity="0.3"/><circle cx="5.25" cy="34.35" r="1.45" fill="#e00a0a"/><circle cx="3.60" cy="35.30" r="1.45" fill="#e00a0a"/><circle cx="1.95" cy="34.35" r="1.45" fill="#e00a0a"/><circle cx="1.95" cy="32.45" r="1.45" fill="#e00a0a"/><circle cx="3.60" cy="31.50" r="1.45" fill="#e00a0a"/><circle cx="5.25" cy="32.45" r="1.45" fill="#e00a0a"/><circle cx="3.6" cy="33.4" r="2.2" fill="#e00a0a"/><circle cx="3.6" cy="33.4" r="0.9" fill="#000" opacity="0.3"/><circle cx="5.25" cy="41.80" r="1.45" fill="#e00a0a"/><circle cx="3.60" cy="42.75" r="1.45" fill="#e00a0a"/><circle cx="1.95" cy="41.80" r="1.45" fill="#e00a0a"/><circle cx="1.95" cy="39.90" r="1.45" fill="#e00a0a"/><circle cx="3.60" cy="38.95" r="1.45" fill="#e00a0a"/><circle cx="5.25" cy="39.90" r="1.45" fill="#e00a0a"/><circle cx="3.6" cy="40.85" r="2.2" fill="#e00a0a"/><circle cx="3.6" cy="40.85" r="0.9" fill="#000" opacity="0.3"/><circle cx="5.25" cy="49.25" r="1.45" fill="#6a10d8"/><circle cx="3.60" cy="50.20" r="1.45" fill="#6a10d8"/><circle cx="1.95" cy="49.25" r="1.45" fill="#6a10d8"/><circle cx="1.95" cy="47.35" r="1.45" fill="#6a10d8"/><circle cx="3.60" cy="46.40" r="1.45" fill="#6a10d8"/><circle cx="5.25" cy="47.35" r="1.45" fill="#6a10d8"/><circle cx="3.6" cy="48.300000000000004" r="2.2" fill="#6a10d8"/><circle cx="3.6" cy="48.300000000000004" r="0.9" fill="#000" opacity="0.3"/><circle cx="5.25" cy="56.70" r="1.45" fill="#e00a0a"/><circle cx="3.60" cy="57.65" r="1.45" fill="#e00a0a"/><circle cx="1.95" cy="56.70" r="1.45" fill="#e00a0a"/><circle cx="1.95" cy="54.80" r="1.45" fill="#e00a0a"/><circle cx="3.60" cy="53.85" r="1.45" fill="#e00a0a"/><circle cx="5.25" cy="54.80" r="1.45" fill="#e00a0a"/><circle cx="3.6" cy="55.75000000000001" r="2.2" fill="#e00a0a"/><circle cx="3.6" cy="55.75000000000001" r="0.9" fill="#000" opacity="0.3"/><circle cx="5.25" cy="64.15" r="1.45" fill="#6a10d8"/><circle cx="3.60" cy="65.10" r="1.45" fill="#6a10d8"/><circle cx="1.95" cy="64.15" r="1.45" fill="#6a10d8"/><circle cx="1.95" cy="62.25" r="1.45" fill="#6a10d8"/><circle cx="3.60" cy="61.30" r="1.45" fill="#6a10d8"/><circle cx="5.25" cy="62.25" r="1.45" fill="#6a10d8"/><circle cx="3.6" cy="63.20000000000001" r="2.2" fill="#6a10d8"/><circle cx="3.6" cy="63.20000000000001" r="0.9" fill="#000" opacity="0.3"/><circle cx="5.25" cy="71.60" r="1.45" fill="#6a10d8"/><circle cx="3.60" cy="72.55" r="1.45" fill="#6a10d8"/><circle cx="1.95" cy="71.60" r="1.45" fill="#6a10d8"/><circle cx="1.95" cy="69.70" r="1.45" fill="#6a10d8"/><circle cx="3.60" cy="68.75" r="1.45" fill="#6a10d8"/><circle cx="5.25" cy="69.70" r="1.45" fill="#6a10d8"/><circle cx="3.6" cy="70.65" r="2.2" fill="#6a10d8"/><circle cx="3.6" cy="70.65" r="0.9" fill="#000" opacity="0.3"/><circle cx="5.25" cy="79.05" r="1.45" fill="#e00a0a"/><circle cx="3.60" cy="80.00" r="1.45" fill="#e00a0a"/><circle cx="1.95" cy="79.05" r="1.45" fill="#e00a0a"/><circle cx="1.95" cy="77.15" r="1.45" fill="#e00a0a"/><circle cx="3.60" cy="76.20" r="1.45" fill="#e00a0a"/><circle cx="5.25" cy="77.15" r="1.45" fill="#e00a0a"/><circle cx="3.6" cy="78.10000000000001" r="2.2" fill="#e00a0a"/><circle cx="3.6" cy="78.10000000000001" r="0.9" fill="#000" opacity="0.3"/><circle cx="5.25" cy="86.50" r="1.45" fill="#6a10d8"/><circle cx="3.60" cy="87.45" r="1.45" fill="#6a10d8"/><circle cx="1.95" cy="86.50" r="1.45" fill="#6a10d8"/><circle cx="1.95" cy="84.60" r="1.45" fill="#6a10d8"/><circle cx="3.60" cy="83.65" r="1.45" fill="#6a10d8"/><circle cx="5.25" cy="84.60" r="1.45" fill="#6a10d8"/><circle cx="3.6" cy="85.55000000000001" r="2.2" fill="#6a10d8"/><circle cx="3.6" cy="85.55000000000001" r="0.9" fill="#000" opacity="0.3"/><circle cx="5.25" cy="93.95" r="1.45" fill="#6a10d8"/><circle cx="3.60" cy="94.90" r="1.45" fill="#6a10d8"/><circle cx="1.95" cy="93.95" r="1.45" fill="#6a10d8"/><circle cx="1.95" cy="92.05" r="1.45" fill="#6a10d8"/><circle cx="3.60" cy="91.10" r="1.45" fill="#6a10d8"/><circle cx="5.25" cy="92.05" r="1.45" fill="#6a10d8"/><circle cx="3.6" cy="93.00000000000001" r="2.2" fill="#6a10d8"/><circle cx="3.6" cy="93.00000000000001" r="0.9" fill="#000" opacity="0.3"/><circle cx="5.25" cy="101.40" r="1.45" fill="#6a10d8"/><circle cx="3.60" cy="102.35" r="1.45" fill="#6a10d8"/><circle cx="1.95" cy="101.40" r="1.45" fill="#6a10d8"/><circle cx="1.95" cy="99.50" r="1.45" fill="#6a10d8"/><circle cx="3.60" cy="98.55" r="1.45" fill="#6a10d8"/><circle cx="5.25" cy="99.50" r="1.45" fill="#6a10d8"/><circle cx="3.6" cy="100.45000000000002" r="2.2" fill="#6a10d8"/><circle cx="3.6" cy="100.45000000000002" r="0.9" fill="#000" opacity="0.3"/><circle cx="5.25" cy="108.85" r="1.45" fill="#e00a0a"/><circle cx="3.60" cy="109.80" r="1.45" fill="#e00a0a"/><circle cx="1.95" cy="108.85" r="1.45" fill="#e00a0a"/><circle cx="1.95" cy="106.95" r="1.45" fill="#e00a0a"/><circle cx="3.60" cy="106.00" r="1.45" fill="#e00a0a"/><circle cx="5.25" cy="106.95" r="1.45" fill="#e00a0a"/><circle cx="3.6" cy="107.90000000000002" r="2.2" fill="#e00a0a"/><circle cx="3.6" cy="107.90000000000002" r="0.9" fill="#000" opacity="0.3"/><circle cx="5.25" cy="116.30" r="1.45" fill="#6a10d8"/><circle cx="3.60" cy="117.25" r="1.45" fill="#6a10d8"/><circle cx="1.95" cy="116.30" r="1.45" fill="#6a10d8"/><circle cx="1.95" cy="114.40" r="1.45" fill="#6a10d8"/><circle cx="3.60" cy="113.45" r="1.45" fill="#6a10d8"/><circle cx="5.25" cy="114.40" r="1.45" fill="#6a10d8"/><circle cx="3.6" cy="115.35000000000002" r="2.2" fill="#6a10d8"/><circle cx="3.6" cy="115.35000000000002" r="0.9" fill="#000" opacity="0.3"/><circle cx="5.25" cy="123.75" r="1.45" fill="#e00a0a"/><circle cx="3.60" cy="124.70" r="1.45" fill="#e00a0a"/><circle cx="1.95" cy="123.75" r="1.45" fill="#e00a0a"/><circle cx="1.95" cy="121.85" r="1.45" fill="#e00a0a"/><circle cx="3.60" cy="120.90" r="1.45" fill="#e00a0a"/><circle cx="5.25" cy="121.85" r="1.45" fill="#e00a0a"/><circle cx="3.6" cy="122.80000000000003" r="2.2" fill="#e00a0a"/><circle cx="3.6" cy="122.80000000000003" r="0.9" fill="#000" opacity="0.3"/></svg>
<svg style="position:absolute;left:0;top:-1px" width="251" height="141" viewBox="0 0 251 141"><g stroke="#3a3a3a" stroke-width="0.85"><line x1="17" y1="22.60" x2="249" y2="22.60"/><line x1="17" y1="26.08" x2="249" y2="26.08"/><line x1="17" y1="29.56" x2="249" y2="29.56"/><line x1="17" y1="33.04" x2="249" y2="33.04"/><line x1="17" y1="36.52" x2="249" y2="36.52"/><line x1="17" y1="54.30" x2="249" y2="54.30"/><line x1="17" y1="57.63" x2="249" y2="57.63"/><line x1="17" y1="60.96" x2="249" y2="60.96"/><line x1="17" y1="64.29" x2="249" y2="64.29"/><line x1="17" y1="67.62" x2="249" y2="67.62"/><line x1="17" y1="78.40" x2="249" y2="78.40"/><line x1="17" y1="81.73" x2="249" y2="81.73"/><line x1="17" y1="85.06" x2="249" y2="85.06"/><line x1="17" y1="88.39" x2="249" y2="88.39"/><line x1="17" y1="91.72" x2="249" y2="91.72"/><line x1="17" y1="110.60" x2="249" y2="110.60"/><line x1="17" y1="113.93" x2="249" y2="113.93"/><line x1="17" y1="117.26" x2="249" y2="117.26"/><line x1="17" y1="120.59" x2="249" y2="120.59"/><line x1="17" y1="123.92" x2="249" y2="123.92"/><line x1="17.2" y1="22.6" x2="17.2" y2="67.62"/><line x1="83.2" y1="22.6" x2="83.2" y2="67.62" stroke="#666" stroke-width="0.8"/><line x1="136.7" y1="22.6" x2="136.7" y2="67.62" stroke="#666" stroke-width="0.8"/><line x1="190.2" y1="22.6" x2="190.2" y2="67.62" stroke="#666" stroke-width="0.8"/><line x1="17.2" y1="78.4" x2="17.2" y2="123.91999999999999"/><line x1="83.2" y1="78.4" x2="83.2" y2="123.91999999999999" stroke="#666" stroke-width="0.8"/><line x1="136.7" y1="78.4" x2="136.7" y2="123.91999999999999" stroke="#666" stroke-width="0.8"/><line x1="190.2" y1="78.4" x2="190.2" y2="123.91999999999999" stroke="#666" stroke-width="0.8"/><line x1="248" y1="78.4" x2="248" y2="123.91999999999999" stroke-width="1.6"/></g><ellipse cx="33.3" cy="40.3" rx="1.9" ry="1.5" fill="#111"/><rect x="34.5" y="24.3" width="0.8" height="15.999999999999996" fill="#1a1a1a"/><ellipse cx="46" cy="38" rx="1.9" ry="1.5" fill="#111"/><rect x="47.2" y="24.3" width="0.8" height="13.7" fill="#1a1a1a"/><rect x="34.5" y="24.3" width="13.500000000000004" height="1.5" fill="#111"/><ellipse cx="60" cy="36.7" rx="1.9" ry="1.5" fill="#111"/><rect x="61.2" y="21" width="0.8" height="15.700000000000003" fill="#1a1a1a"/><ellipse cx="73.2" cy="35" rx="1.9" ry="1.5" fill="#111"/><rect x="74.4" y="21" width="0.8" height="14" fill="#1a1a1a"/><rect x="61.2" y="21" width="14.000000000000004" height="1.5" fill="#111"/><ellipse cx="86.6" cy="33" rx="1.9" ry="1.5" fill="#111"/><rect x="87.8" y="22" width="0.8" height="11" fill="#1a1a1a"/><ellipse cx="113.2" cy="32.4" rx="1.9" ry="1.5" fill="#111"/><rect x="114.4" y="21.4" width="0.8" height="11.0" fill="#1a1a1a"/><ellipse cx="140.4" cy="30.8" rx="1.9" ry="1.5" fill="#111"/><rect x="141.6" y="19.8" width="0.8" height="11.0" fill="#1a1a1a"/><ellipse cx="167.2" cy="30.8" rx="1.9" ry="1.5" fill="#111"/><rect x="168.39999999999998" y="19.8" width="0.8" height="11.0" fill="#1a1a1a"/><ellipse cx="194" cy="32.2" rx="1.6" ry="1.2" fill="none" stroke="#222" stroke-width="0.9"/><rect x="195.2" y="21" width="0.8" height="11.200000000000003" fill="#1a1a1a"/><ellipse cx="33" cy="56.6" rx="1.6" ry="1.2" fill="none" stroke="#222" stroke-width="0.9"/><ellipse cx="33" cy="61.6" rx="1.6" ry="1.2" fill="none" stroke="#222" stroke-width="0.9"/><rect x="34.2" y="45" width="0.8" height="18.6" fill="#1a1a1a"/><ellipse cx="86.6" cy="56.6" rx="1.6" ry="1.2" fill="none" stroke="#222" stroke-width="0.9"/><ellipse cx="86.6" cy="60.6" rx="1.6" ry="1.2" fill="none" stroke="#222" stroke-width="0.9"/><rect x="87.8" y="45" width="0.8" height="16" fill="#1a1a1a"/><ellipse cx="140.4" cy="55.6" rx="1.6" ry="1.2" fill="none" stroke="#222" stroke-width="0.9"/><ellipse cx="140.4" cy="57.6" rx="1.6" ry="1.2" fill="none" stroke="#222" stroke-width="0.9"/><rect x="139.2" y="55.6" width="0.8" height="12.399999999999999" fill="#1a1a1a"/><ellipse cx="194" cy="55.6" rx="1.6" ry="1.2" fill="none" stroke="#222" stroke-width="0.9"/><ellipse cx="194" cy="60.6" rx="1.6" ry="1.2" fill="none" stroke="#222" stroke-width="0.9"/><rect x="195.2" y="45" width="0.8" height="16" fill="#1a1a1a"/><ellipse cx="33.3" cy="90.9" rx="1.9" ry="1.5" fill="#111"/><rect x="34.5" y="76.7" width="0.8" height="14.200000000000003" fill="#1a1a1a"/><ellipse cx="46.2" cy="90.9" rx="1.9" ry="1.5" fill="#111"/><rect x="47.400000000000006" y="76.7" width="0.8" height="14.200000000000003" fill="#1a1a1a"/><ellipse cx="60" cy="90.9" rx="1.9" ry="1.5" fill="#111"/><rect x="61.2" y="76.7" width="0.8" height="14.200000000000003" fill="#1a1a1a"/><ellipse cx="73.2" cy="90.9" rx="1.9" ry="1.5" fill="#111"/><rect x="74.4" y="76.7" width="0.8" height="14.200000000000003" fill="#1a1a1a"/><rect x="34.5" y="76.7" width="13.7" height="1.5" fill="#111"/><rect x="61.2" y="76.7" width="14.000000000000004" height="1.5" fill="#111"/><ellipse cx="86.6" cy="92.6" rx="1.9" ry="1.5" fill="#111"/><rect x="87.8" y="80.6" width="0.8" height="12.0" fill="#1a1a1a"/><ellipse cx="113" cy="91.5" rx="1.9" ry="1.5" fill="#111"/><rect x="114.2" y="79.5" width="0.8" height="12.0" fill="#1a1a1a"/><ellipse cx="140.4" cy="93.9" rx="1.9" ry="1.5" fill="#111"/><rect x="141.6" y="81.9" width="0.8" height="12.0" fill="#1a1a1a"/><ellipse cx="167.2" cy="93.9" rx="1.9" ry="1.5" fill="#111"/><rect x="168.39999999999998" y="81.9" width="0.8" height="12.0" fill="#1a1a1a"/><ellipse cx="194" cy="94.8" rx="1.6" ry="1.2" fill="none" stroke="#222" stroke-width="0.9"/><rect x="195.2" y="82" width="0.8" height="12.799999999999997" fill="#1a1a1a"/><ellipse cx="33.3" cy="111.6" rx="1.6" ry="1.2" fill="none" stroke="#222" stroke-width="0.9"/><ellipse cx="33.3" cy="114" rx="1.6" ry="1.2" fill="none" stroke="#222" stroke-width="0.9"/><rect x="32.1" y="111.6" width="0.8" height="13.0" fill="#1a1a1a"/><ellipse cx="86.6" cy="112" rx="1.6" ry="1.2" fill="none" stroke="#222" stroke-width="0.9"/><ellipse cx="86.6" cy="117.5" rx="1.6" ry="1.2" fill="none" stroke="#222" stroke-width="0.9"/><rect x="87.8" y="101" width="0.8" height="17" fill="#1a1a1a"/><ellipse cx="138.9" cy="112.6" rx="1.6" ry="1.2" fill="none" stroke="#222" stroke-width="0.9"/><rect x="137.7" y="112.6" width="0.8" height="11.400000000000006" fill="#1a1a1a"/><ellipse cx="194" cy="112.6" rx="1.6" ry="1.2" fill="none" stroke="#222" stroke-width="0.9"/><ellipse cx="194" cy="118.6" rx="1.6" ry="1.2" fill="none" stroke="#222" stroke-width="0.9"/><rect x="195.2" y="101" width="0.8" height="18" fill="#1a1a1a"/><g fill="none" stroke="#555" stroke-width="0.8"><path d="M21 36.6 C17 35.6 18 30.6 21 29.6 C24 28.6 24 34.6 21 35.6 M21 29.6 L20.5 19.6 M21 35.6 L21 39.6"/><path d="M18.5 56.3 C20 53.8 24 54.3 23.5 57.8 C23 60.3 20.5 61.8 18.5 62.3"/><path d="M15.5 20.6 C12.5 28.6 15.5 38.6 13.5 45.11 C15.5 58.3 12.5 64.3 15.5 69.62" stroke="#666"/><path d="M21 92.4 C17 91.4 18 86.4 21 85.4 C24 84.4 24 90.4 21 91.4 M21 85.4 L20.5 75.4 M21 91.4 L21 95.4"/><path d="M18.5 112.6 C20 110.1 24 110.6 23.5 114.1 C23 116.6 20.5 118.1 18.5 118.6"/><path d="M15.5 76.4 C12.5 84.4 15.5 94.4 13.5 101.16 C15.5 114.6 12.5 120.6 15.5 125.91999999999999" stroke="#666"/></g><text x="24.4" y="28.200000000000003" font-size="6.6" font-weight="bold" font-family="Liberation Sans" fill="#2a2a2a">2</text><text x="24.4" y="36.2" font-size="6.6" font-weight="bold" font-family="Liberation Sans" fill="#2a2a2a">4</text><text x="24.4" y="59.9" font-size="6.6" font-weight="bold" font-family="Liberation Sans" fill="#2a2a2a">2</text><text x="24.4" y="67.89999999999999" font-size="6.6" font-weight="bold" font-family="Liberation Sans" fill="#2a2a2a">4</text></svg>
<div style="position:absolute;left:0.6px;top:126.4px;font-size:11.6px;line-height:1;color:#18b418;white-space:nowrap;font-family:'Liberation Mono',monospace;font-weight:bold;-webkit-text-stroke:0.25px currentColor;transform:scaleX(0.68);transform-origin:0 0;">34</div>
<div style="position:absolute;left:23px;top:132.6px;font-size:5px;line-height:1;color:#1a1a1a;white-space:nowrap;font-family:'Liberation Mono',monospace;font-weight:bold;transform:scaleX(0.85);transform-origin:0 0;">На</div>
<div style="position:absolute;left:31.6px;top:126.4px;font-size:11.6px;line-height:1;color:#bc1c1c;white-space:nowrap;font-family:'Liberation Mono',monospace;font-weight:bold;-webkit-text-stroke:0.25px currentColor;transform:scaleX(0.68);transform-origin:0 0;">34</div>
<div style="position:absolute;left:174.5px;top:129.3px;font-size:7.2px;line-height:1;color:#1c1ce0;white-space:nowrap;font-family:'Liberation Mono',monospace;font-weight:bold;transform:scaleX(0.92);transform-origin:0 0;">F1 - Помощь</div>
<div style="position:absolute;left:225.2px;top:127.4px;width:25.80000000000001px;height:8.3px;background:#fcfbe2;"></div>
<div style="position:absolute;left:231.6px;top:126.7px;font-size:11px;line-height:1;color:#2470a0;white-space:nowrap;font-family:'Liberation Mono',monospace;font-weight:bold;letter-spacing:2px;-webkit-text-stroke:0.25px currentColor;transform:scaleX(0.8);transform-origin:0 0;">58</div>
</div>
<div style="position:absolute;left:0;top:479px;width:601px;height:1px;background:#1c1c1c"></div>
<div style="position:absolute;left:0;top:480px;width:601px;height:7px;background:#292929"></div>
<div style="position:absolute;left:280px;top:30px;width:127px;height:35px;border-radius:10px;background:#2b2b2b;box-shadow:0 0.5px 1.5px rgba(0,0,0,0.45);"></div>
<div style="position:absolute;left:298.2px;top:37.5px;font-size:18px;line-height:1.2;color:#a8a8a8;white-space:nowrap;letter-spacing:1.3px;-webkit-text-stroke:0.2px #a8a8a8;">15</div>
<div style="position:absolute;left:324.2px;top:37.3px;font-size:17.8px;line-height:1.2;color:#a8a8a8;white-space:nowrap;letter-spacing:1.55px;-webkit-text-stroke:0.2px #a8a8a8;">января</div>
</body></html>
